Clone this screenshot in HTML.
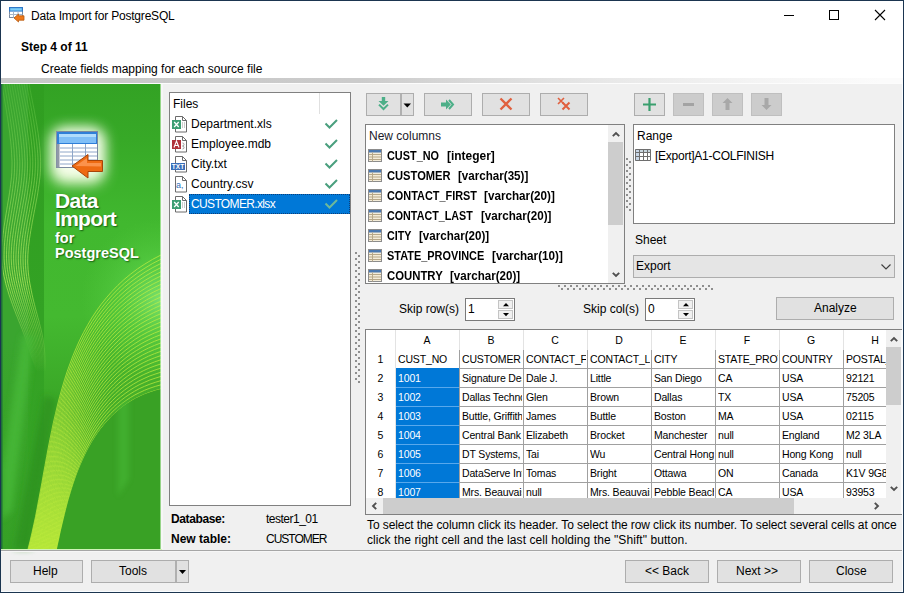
<!DOCTYPE html>
<html><head><meta charset="utf-8">
<style>
*{margin:0;padding:0;box-sizing:border-box}
html,body{width:904px;height:593px;overflow:hidden;background:#f0f0f0}
body{position:relative;font-family:"Liberation Sans",sans-serif;font-size:12px;color:#000}
.a{position:absolute}
.t{position:absolute;line-height:14px;white-space:nowrap}
.b{font-weight:bold}
.btn{position:absolute;background:#e1e1e1;border:1px solid #adadad}
.dis{position:absolute;background:#cccccc;border:1px solid #bfbfbf}
.box{position:absolute;background:#fff;border:1px solid #828790}
.g{position:absolute;font-size:10px;line-height:12px;white-space:nowrap;overflow:hidden}
svg{position:absolute;overflow:visible}
</style></head><body>
<!-- header -->
<div class="a" style="left:0;top:0;width:904px;height:78px;background:#fff"></div>
<div class="a" style="left:0;top:78px;width:904px;height:5px;background:linear-gradient(to right,#c8c8c8 0,#cbcbcb 360px,#dadada 480px,#e9e9e9 620px,#f4f4f4 760px,#fbfbfb 880px)"></div>
<div class="a" style="left:0;top:83px;width:904px;height:1px;background:#fcfcfc"></div>

<!-- title icon -->
<svg style="left:9px;top:7px" width="16" height="16" viewBox="0 0 16 16">
  <rect x="0.5" y="0.5" width="13" height="10" fill="#fff" stroke="#7a8aa0"/>
  <rect x="0" y="0" width="14" height="4.6" fill="#2f78c8"/>
  <rect x="1.2" y="1.2" width="11.6" height="2.4" fill="#7cd0fa"/>
  <path d="M4.5 4.6v6M9 4.6v6M0.5 7.5h13" stroke="#a8b6c8" stroke-width="1"/>
  <path d="M5 11 L9.5 7 V8.8 H15 V13.2 H9.5 V15 Z" fill="#f07818" stroke="#b85a10" stroke-width="0.8"/>
</svg>
<div class="t" style="left:31px;top:9px;letter-spacing:-0.2px">Data Import for PostgreSQL</div>

<!-- window controls -->
<div class="a" style="left:784px;top:15px;width:10px;height:1px;background:#000"></div>
<div class="a" style="left:829px;top:10px;width:10px;height:10px;border:1px solid #000"></div>
<svg style="left:875px;top:10px" width="10" height="10" viewBox="0 0 10 10"><path d="M0 0L10 10M10 0L0 10" stroke="#000" stroke-width="1.1"/></svg>

<div class="t b" style="left:21px;top:40px">Step 4 of 11</div>
<div class="t" style="left:41px;top:62px">Create fields mapping for each source file</div>

<!-- green panel -->
<svg style="left:1px;top:84px" width="160" height="465" viewBox="0 0 160 465">
<defs>
<linearGradient id="gb" x1="0" y1="0" x2="0" y2="1">
<stop offset="0" stop-color="#33a224"/><stop offset="0.12" stop-color="#37a927"/><stop offset="0.3" stop-color="#41b82f"/><stop offset="0.5" stop-color="#44b930"/><stop offset="0.68" stop-color="#3aa727"/><stop offset="1" stop-color="#389f24"/>
</linearGradient>
<radialGradient id="glow" cx="0.5" cy="0.5" r="0.5">
<stop offset="0" stop-color="#ffffff" stop-opacity="1"/><stop offset="0.55" stop-color="#f0ffd8" stop-opacity="0.85"/><stop offset="1" stop-color="#a0e878" stop-opacity="0"/>
</radialGradient>
<linearGradient id="sw" x1="0" y1="0" x2="0" y2="1">
<stop offset="0" stop-color="#8ee040" stop-opacity="0"/><stop offset="0.55" stop-color="#8ed83a" stop-opacity="0.15"/><stop offset="1" stop-color="#a8e030" stop-opacity="0.9"/>
</linearGradient>
<radialGradient id="rt" cx="160" cy="215" r="80" gradientUnits="userSpaceOnUse">
<stop offset="0" stop-color="#7ae070" stop-opacity="1"/><stop offset="0.5" stop-color="#5ad048" stop-opacity="0.6"/><stop offset="1" stop-color="#52c83c" stop-opacity="0"/>
</radialGradient>
</defs>
<rect width="160" height="465" fill="url(#gb)"/>
<rect x="0" y="0" width="160" height="465" fill="url(#rt)"/>
<linearGradient id="ls" x1="0" y1="0" x2="0" y2="465" gradientUnits="userSpaceOnUse"><stop offset="0" stop-color="#3aa52f"/><stop offset="0.55" stop-color="#3aa52f"/><stop offset="0.75" stop-color="#38a328"/><stop offset="1" stop-color="#36a026"/></linearGradient>
<rect x="0" y="0" width="27" height="465" fill="url(#ls)"/>
<linearGradient id="ds" x1="0" y1="0" x2="0" y2="465" gradientUnits="userSpaceOnUse"><stop offset="0" stop-color="#309e21"/><stop offset="0.5" stop-color="#33a224"/><stop offset="1" stop-color="#37a326"/></linearGradient>
<rect x="27" y="0" width="16" height="465" fill="url(#ds)"/>
<linearGradient id="lg" x1="0" y1="0" x2="0" y2="320" gradientUnits="userSpaceOnUse"><stop offset="0" stop-color="#70d050" stop-opacity="0.4"/><stop offset="0.3" stop-color="#98e060" stop-opacity="0.75"/><stop offset="0.62" stop-color="#c0f060" stop-opacity="1"/><stop offset="0.82" stop-color="#a0e060" stop-opacity="0.35"/><stop offset="0.9" stop-color="#a0e060" stop-opacity="0"/></linearGradient>
<g fill="none" stroke="url(#lg)" stroke-width="0.7"><path d="M1.0 0.0 L1.2 1.8 L1.5 3.9 L1.9 6.1 L2.3 8.6 L2.8 11.3 L3.3 14.2 L3.8 17.2 L4.3 20.4 L4.9 23.7 L5.5 27.2 L6.0 30.8 L6.6 34.4 L7.2 38.2 L7.7 42.0 L8.3 45.9 L8.8 49.8 L9.2 53.8 L9.7 57.7 L10.1 61.7 L10.4 65.6 L10.6 69.6 L10.8 73.4 L11.0 77.3 L11.0 81.0 L10.9 84.8 L10.8 88.6 L10.5 92.5 L10.1 96.5 L9.6 100.5 L9.1 104.6 L8.5 108.7 L7.9 112.9 L7.2 117.0 L6.5 121.2 L5.8 125.5 L5.1 129.7 L4.4 133.9 L3.8 138.1 L3.1 142.3 L2.6 146.5 L2.0 150.6 L1.6 154.7 L1.2 158.8 L0.9 162.7 L0.8 166.7 L0.7 170.5 L0.8 174.3 L1.0 178.0 L1.4 181.6 L1.8 185.3 L2.4 188.9 L3.1 192.5 L4.0 196.1 L4.8 199.7 L5.8 203.3 L6.9 206.8 L7.9 210.3 L9.1 213.8 L10.3 217.2 L11.5 220.6 L12.7 223.9 L14.0 227.2 L15.2 230.4 L16.5 233.5 L17.7 236.6 L18.9 239.6 L20.1 242.6 L21.2 245.4 L22.2 248.2 L23.2 250.9 L24.2 253.5 L25.0 256.0 L25.8 258.4 L26.6 260.8 L27.3 263.1 L28.1 265.3 L28.8 267.5 L29.5 269.6 L30.2 271.7 L30.9 273.6 L31.6 275.5 L32.3 277.4 L32.9 279.2 L33.5 280.9 L34.1 282.5 L34.7 284.1 L35.2 285.6 L35.7 287.0 L36.2 288.4 L36.7 289.7 L37.2 290.9 L37.6 292.1 L38.0 293.2 L38.4 294.2 L38.7 295.1 L39.0 296.0"/><path d="M3.5 0.0 L3.7 1.8 L4.0 3.9 L4.4 6.1 L4.8 8.6 L5.3 11.3 L5.8 14.2 L6.3 17.2 L6.9 20.4 L7.4 23.7 L8.0 27.2 L8.6 30.8 L9.2 34.4 L9.8 38.2 L10.3 42.0 L10.8 45.9 L11.4 49.8 L11.8 53.8 L12.3 57.7 L12.6 61.7 L13.0 65.6 L13.2 69.6 L13.4 73.4 L13.6 77.3 L13.6 81.0 L13.5 84.8 L13.4 88.6 L13.1 92.5 L12.7 96.5 L12.2 100.5 L11.7 104.6 L11.1 108.7 L10.5 112.9 L9.8 117.0 L9.1 121.2 L8.4 125.5 L7.7 129.7 L7.0 133.9 L6.3 138.1 L5.6 142.3 L5.0 146.5 L4.5 150.6 L4.0 154.7 L3.6 158.8 L3.3 162.7 L3.2 166.7 L3.1 170.5 L3.1 174.3 L3.3 178.0 L3.7 181.6 L4.1 185.3 L4.7 188.9 L5.4 192.5 L6.2 196.1 L7.0 199.7 L8.0 203.3 L9.0 206.8 L10.0 210.3 L11.2 213.8 L12.3 217.2 L13.5 220.6 L14.7 223.9 L15.9 227.2 L17.1 230.4 L18.3 233.5 L19.5 236.6 L20.7 239.6 L21.8 242.6 L22.9 245.4 L23.9 248.2 L24.9 250.9 L25.8 253.5 L26.6 256.0 L27.3 258.4 L28.0 260.8 L28.8 263.1 L29.5 265.3 L30.2 267.5 L30.8 269.6 L31.5 271.7 L32.1 273.6 L32.7 275.5 L33.3 277.4 L33.9 279.2 L34.5 280.9 L35.0 282.5 L35.6 284.1 L36.1 285.6 L36.5 287.0 L37.0 288.4 L37.4 289.7 L37.8 290.9 L38.2 292.1 L38.6 293.2 L38.9 294.2 L39.2 295.1 L39.5 296.0"/><path d="M5.9 0.0 L6.2 1.8 L6.5 3.9 L6.9 6.1 L7.3 8.6 L7.8 11.3 L8.3 14.2 L8.8 17.2 L9.4 20.4 L9.9 23.7 L10.5 27.2 L11.1 30.8 L11.7 34.4 L12.3 38.2 L12.9 42.0 L13.4 45.9 L13.9 49.8 L14.4 53.8 L14.9 57.7 L15.2 61.7 L15.6 65.6 L15.8 69.6 L16.0 73.4 L16.2 77.3 L16.2 81.0 L16.1 84.8 L15.9 88.6 L15.7 92.5 L15.3 96.5 L14.8 100.5 L14.3 104.6 L13.7 108.7 L13.0 112.9 L12.3 117.0 L11.6 121.2 L10.9 125.5 L10.2 129.7 L9.5 133.9 L8.8 138.1 L8.1 142.3 L7.5 146.5 L7.0 150.6 L6.5 154.7 L6.1 158.8 L5.8 162.7 L5.6 166.7 L5.5 170.5 L5.5 174.3 L5.7 178.0 L6.0 181.6 L6.4 185.3 L7.0 188.9 L7.6 192.5 L8.4 196.1 L9.2 199.7 L10.1 203.3 L11.1 206.8 L12.1 210.3 L13.2 213.8 L14.3 217.2 L15.5 220.6 L16.7 223.9 L17.8 227.2 L19.0 230.4 L20.2 233.5 L21.4 236.6 L22.5 239.6 L23.6 242.6 L24.6 245.4 L25.6 248.2 L26.5 250.9 L27.4 253.5 L28.1 256.0 L28.8 258.4 L29.5 260.8 L30.2 263.1 L30.9 265.3 L31.5 267.5 L32.1 269.6 L32.7 271.7 L33.3 273.6 L33.9 275.5 L34.4 277.4 L35.0 279.2 L35.5 280.9 L36.0 282.5 L36.5 284.1 L36.9 285.6 L37.3 287.0 L37.8 288.4 L38.1 289.7 L38.5 290.9 L38.9 292.1 L39.2 293.2 L39.5 294.2 L39.8 295.1 L40.0 296.0"/><path d="M8.4 0.0 L8.7 1.8 L9.0 3.9 L9.4 6.1 L9.8 8.6 L10.3 11.3 L10.8 14.2 L11.3 17.2 L11.9 20.4 L12.5 23.7 L13.1 27.2 L13.7 30.8 L14.3 34.4 L14.9 38.2 L15.4 42.0 L16.0 45.9 L16.5 49.8 L17.0 53.8 L17.4 57.7 L17.8 61.7 L18.2 65.6 L18.4 69.6 L18.6 73.4 L18.8 77.3 L18.8 81.0 L18.7 84.8 L18.5 88.6 L18.2 92.5 L17.9 96.5 L17.4 100.5 L16.8 104.6 L16.2 108.7 L15.6 112.9 L14.9 117.0 L14.2 121.2 L13.4 125.5 L12.7 129.7 L12.0 133.9 L11.3 138.1 L10.6 142.3 L10.0 146.5 L9.4 150.6 L8.9 154.7 L8.5 158.8 L8.2 162.7 L8.0 166.7 L7.8 170.5 L7.9 174.3 L8.0 178.0 L8.3 181.6 L8.7 185.3 L9.2 188.9 L9.9 192.5 L10.6 196.1 L11.4 199.7 L12.3 203.3 L13.2 206.8 L14.2 210.3 L15.3 213.8 L16.4 217.2 L17.5 220.6 L18.6 223.9 L19.8 227.2 L20.9 230.4 L22.1 233.5 L23.2 236.6 L24.3 239.6 L25.3 242.6 L26.3 245.4 L27.3 248.2 L28.1 250.9 L29.0 253.5 L29.7 256.0 L30.3 258.4 L31.0 260.8 L31.6 263.1 L32.2 265.3 L32.8 267.5 L33.4 269.6 L34.0 271.7 L34.5 273.6 L35.0 275.5 L35.5 277.4 L36.0 279.2 L36.5 280.9 L36.9 282.5 L37.3 284.1 L37.8 285.6 L38.1 287.0 L38.5 288.4 L38.9 289.7 L39.2 290.9 L39.5 292.1 L39.8 293.2 L40.1 294.2 L40.3 295.1 L40.6 296.0"/><path d="M10.9 0.0 L11.1 1.8 L11.5 3.9 L11.8 6.1 L12.3 8.6 L12.8 11.3 L13.3 14.2 L13.8 17.2 L14.4 20.4 L15.0 23.7 L15.6 27.2 L16.2 30.8 L16.8 34.4 L17.4 38.2 L18.0 42.0 L18.6 45.9 L19.1 49.8 L19.6 53.8 L20.0 57.7 L20.4 61.7 L20.8 65.6 L21.0 69.6 L21.2 73.4 L21.4 77.3 L21.4 81.0 L21.3 84.8 L21.1 88.6 L20.8 92.5 L20.4 96.5 L20.0 100.5 L19.4 104.6 L18.8 108.7 L18.1 112.9 L17.4 117.0 L16.7 121.2 L16.0 125.5 L15.2 129.7 L14.5 133.9 L13.8 138.1 L13.1 142.3 L12.5 146.5 L11.9 150.6 L11.4 154.7 L10.9 158.8 L10.6 162.7 L10.4 166.7 L10.2 170.5 L10.2 174.3 L10.4 178.0 L10.6 181.6 L11.0 185.3 L11.5 188.9 L12.1 192.5 L12.8 196.1 L13.6 199.7 L14.4 203.3 L15.4 206.8 L16.3 210.3 L17.4 213.8 L18.4 217.2 L19.5 220.6 L20.6 223.9 L21.7 227.2 L22.8 230.4 L23.9 233.5 L25.0 236.6 L26.0 239.6 L27.1 242.6 L28.0 245.4 L28.9 248.2 L29.8 250.9 L30.6 253.5 L31.2 256.0 L31.9 258.4 L32.5 260.8 L33.1 263.1 L33.6 265.3 L34.2 267.5 L34.7 269.6 L35.2 271.7 L35.7 273.6 L36.2 275.5 L36.6 277.4 L37.1 279.2 L37.5 280.9 L37.9 282.5 L38.2 284.1 L38.6 285.6 L38.9 287.0 L39.3 288.4 L39.6 289.7 L39.9 290.9 L40.1 292.1 L40.4 293.2 L40.6 294.2 L40.9 295.1 L41.1 296.0"/><path d="M13.3 0.0 L13.6 1.8 L13.9 3.9 L14.3 6.1 L14.8 8.6 L15.3 11.3 L15.8 14.2 L16.3 17.2 L16.9 20.4 L17.5 23.7 L18.1 27.2 L18.8 30.8 L19.4 34.4 L20.0 38.2 L20.6 42.0 L21.1 45.9 L21.7 49.8 L22.2 53.8 L22.6 57.7 L23.0 61.7 L23.4 65.6 L23.6 69.6 L23.8 73.4 L24.0 77.3 L24.0 81.0 L23.9 84.8 L23.7 88.6 L23.4 92.5 L23.0 96.5 L22.5 100.5 L22.0 104.6 L21.4 108.7 L20.7 112.9 L20.0 117.0 L19.3 121.2 L18.5 125.5 L17.8 129.7 L17.0 133.9 L16.3 138.1 L15.6 142.3 L15.0 146.5 L14.4 150.6 L13.8 154.7 L13.4 158.8 L13.0 162.7 L12.8 166.7 L12.6 170.5 L12.6 174.3 L12.7 178.0 L12.9 181.6 L13.3 185.3 L13.8 188.9 L14.4 192.5 L15.0 196.1 L15.8 199.7 L16.6 203.3 L17.5 206.8 L18.4 210.3 L19.4 213.8 L20.4 217.2 L21.5 220.6 L22.6 223.9 L23.6 227.2 L24.7 230.4 L25.8 233.5 L26.8 236.6 L27.8 239.6 L28.8 242.6 L29.7 245.4 L30.6 248.2 L31.4 250.9 L32.2 253.5 L32.8 256.0 L33.4 258.4 L34.0 260.8 L34.5 263.1 L35.0 265.3 L35.5 267.5 L36.0 269.6 L36.5 271.7 L36.9 273.6 L37.3 275.5 L37.7 277.4 L38.1 279.2 L38.5 280.9 L38.8 282.5 L39.1 284.1 L39.4 285.6 L39.7 287.0 L40.0 288.4 L40.3 289.7 L40.5 290.9 L40.8 292.1 L41.0 293.2 L41.2 294.2 L41.4 295.1 L41.6 296.0"/><path d="M15.8 0.0 L16.1 1.8 L16.4 3.9 L16.8 6.1 L17.3 8.6 L17.7 11.3 L18.3 14.2 L18.8 17.2 L19.4 20.4 L20.1 23.7 L20.7 27.2 L21.3 30.8 L21.9 34.4 L22.5 38.2 L23.1 42.0 L23.7 45.9 L24.3 49.8 L24.8 53.8 L25.2 57.7 L25.6 61.7 L26.0 65.6 L26.2 69.6 L26.4 73.4 L26.6 77.3 L26.6 81.0 L26.5 84.8 L26.3 88.6 L26.0 92.5 L25.6 96.5 L25.1 100.5 L24.6 104.6 L23.9 108.7 L23.3 112.9 L22.5 117.0 L21.8 121.2 L21.0 125.5 L20.3 129.7 L19.5 133.9 L18.8 138.1 L18.1 142.3 L17.4 146.5 L16.8 150.6 L16.3 154.7 L15.8 158.8 L15.4 162.7 L15.2 166.7 L15.0 170.5 L14.9 174.3 L15.0 178.0 L15.3 181.6 L15.6 185.3 L16.1 188.9 L16.6 192.5 L17.2 196.1 L18.0 199.7 L18.8 203.3 L19.6 206.8 L20.5 210.3 L21.5 213.8 L22.5 217.2 L23.5 220.6 L24.5 223.9 L25.6 227.2 L26.6 230.4 L27.6 233.5 L28.6 236.6 L29.6 239.6 L30.6 242.6 L31.5 245.4 L32.3 248.2 L33.1 250.9 L33.8 253.5 L34.4 256.0 L34.9 258.4 L35.4 260.8 L35.9 263.1 L36.4 265.3 L36.9 267.5 L37.3 269.6 L37.7 271.7 L38.1 273.6 L38.5 275.5 L38.8 277.4 L39.1 279.2 L39.4 280.9 L39.7 282.5 L40.0 284.1 L40.3 285.6 L40.5 287.0 L40.8 288.4 L41.0 289.7 L41.2 290.9 L41.4 292.1 L41.6 293.2 L41.8 294.2 L42.0 295.1 L42.1 296.0"/><path d="M18.3 0.0 L18.6 1.8 L18.9 3.9 L19.3 6.1 L19.7 8.6 L20.2 11.3 L20.8 14.2 L21.4 17.2 L22.0 20.4 L22.6 23.7 L23.2 27.2 L23.9 30.8 L24.5 34.4 L25.1 38.2 L25.7 42.0 L26.3 45.9 L26.8 49.8 L27.4 53.8 L27.8 57.7 L28.2 61.7 L28.6 65.6 L28.8 69.6 L29.1 73.4 L29.2 77.3 L29.2 81.0 L29.1 84.8 L28.9 88.6 L28.6 92.5 L28.2 96.5 L27.7 100.5 L27.1 104.6 L26.5 108.7 L25.8 112.9 L25.1 117.0 L24.3 121.2 L23.6 125.5 L22.8 129.7 L22.0 133.9 L21.3 138.1 L20.6 142.3 L19.9 146.5 L19.3 150.6 L18.7 154.7 L18.3 158.8 L17.9 162.7 L17.6 166.7 L17.4 170.5 L17.3 174.3 L17.4 178.0 L17.6 181.6 L17.9 185.3 L18.3 188.9 L18.8 192.5 L19.5 196.1 L20.2 199.7 L20.9 203.3 L21.7 206.8 L22.6 210.3 L23.6 213.8 L24.5 217.2 L25.5 220.6 L26.5 223.9 L27.5 227.2 L28.5 230.4 L29.5 233.5 L30.5 236.6 L31.4 239.6 L32.3 242.6 L33.2 245.4 L34.0 248.2 L34.7 250.9 L35.3 253.5 L35.9 256.0 L36.4 258.4 L36.9 260.8 L37.4 263.1 L37.8 265.3 L38.2 267.5 L38.6 269.6 L38.9 271.7 L39.3 273.6 L39.6 275.5 L39.9 277.4 L40.2 279.2 L40.4 280.9 L40.7 282.5 L40.9 284.1 L41.1 285.6 L41.3 287.0 L41.5 288.4 L41.7 289.7 L41.9 290.9 L42.0 292.1 L42.2 293.2 L42.4 294.2 L42.5 295.1 L42.6 296.0"/><path d="M20.8 0.0 L21.0 1.8 L21.4 3.9 L21.8 6.1 L22.2 8.6 L22.7 11.3 L23.3 14.2 L23.9 17.2 L24.5 20.4 L25.1 23.7 L25.7 27.2 L26.4 30.8 L27.0 34.4 L27.7 38.2 L28.3 42.0 L28.9 45.9 L29.4 49.8 L29.9 53.8 L30.4 57.7 L30.8 61.7 L31.2 65.6 L31.5 69.6 L31.7 73.4 L31.8 77.3 L31.8 81.0 L31.7 84.8 L31.5 88.6 L31.2 92.5 L30.8 96.5 L30.3 100.5 L29.7 104.6 L29.1 108.7 L28.4 112.9 L27.7 117.0 L26.9 121.2 L26.1 125.5 L25.3 129.7 L24.6 133.9 L23.8 138.1 L23.1 142.3 L22.4 146.5 L21.8 150.6 L21.2 154.7 L20.7 158.8 L20.3 162.7 L20.0 166.7 L19.8 170.5 L19.7 174.3 L19.7 178.0 L19.9 181.6 L20.2 185.3 L20.6 188.9 L21.1 192.5 L21.7 196.1 L22.3 199.7 L23.1 203.3 L23.9 206.8 L24.7 210.3 L25.6 213.8 L26.5 217.2 L27.5 220.6 L28.5 223.9 L29.4 227.2 L30.4 230.4 L31.3 233.5 L32.3 236.6 L33.2 239.6 L34.1 242.6 L34.9 245.4 L35.6 248.2 L36.3 250.9 L36.9 253.5 L37.5 256.0 L38.0 258.4 L38.4 260.8 L38.8 263.1 L39.2 265.3 L39.5 267.5 L39.9 269.6 L40.2 271.7 L40.5 273.6 L40.7 275.5 L41.0 277.4 L41.2 279.2 L41.4 280.9 L41.6 282.5 L41.8 284.1 L42.0 285.6 L42.1 287.0 L42.3 288.4 L42.4 289.7 L42.6 290.9 L42.7 292.1 L42.8 293.2 L42.9 294.2 L43.0 295.1 L43.2 296.0"/><path d="M23.2 0.0 L23.5 1.8 L23.8 3.9 L24.3 6.1 L24.7 8.6 L25.2 11.3 L25.8 14.2 L26.4 17.2 L27.0 20.4 L27.6 23.7 L28.3 27.2 L28.9 30.8 L29.6 34.4 L30.2 38.2 L30.8 42.0 L31.4 45.9 L32.0 49.8 L32.5 53.8 L33.0 57.7 L33.4 61.7 L33.8 65.6 L34.1 69.6 L34.3 73.4 L34.4 77.3 L34.4 81.0 L34.3 84.8 L34.1 88.6 L33.8 92.5 L33.4 96.5 L32.9 100.5 L32.3 104.6 L31.6 108.7 L30.9 112.9 L30.2 117.0 L29.4 121.2 L28.7 125.5 L27.9 129.7 L27.1 133.9 L26.3 138.1 L25.6 142.3 L24.9 146.5 L24.2 150.6 L23.6 154.7 L23.1 158.8 L22.7 162.7 L22.4 166.7 L22.1 170.5 L22.0 174.3 L22.1 178.0 L22.2 181.6 L22.5 185.3 L22.9 188.9 L23.3 192.5 L23.9 196.1 L24.5 199.7 L25.2 203.3 L26.0 206.8 L26.8 210.3 L27.7 213.8 L28.6 217.2 L29.5 220.6 L30.4 223.9 L31.4 227.2 L32.3 230.4 L33.2 233.5 L34.1 236.6 L35.0 239.6 L35.8 242.6 L36.6 245.4 L37.3 248.2 L38.0 250.9 L38.5 253.5 L39.0 256.0 L39.5 258.4 L39.9 260.8 L40.2 263.1 L40.6 265.3 L40.9 267.5 L41.2 269.6 L41.4 271.7 L41.7 273.6 L41.9 275.5 L42.1 277.4 L42.3 279.2 L42.4 280.9 L42.6 282.5 L42.7 284.1 L42.8 285.6 L42.9 287.0 L43.0 288.4 L43.1 289.7 L43.2 290.9 L43.3 292.1 L43.4 293.2 L43.5 294.2 L43.6 295.1 L43.7 296.0"/><path d="M25.7 0.0 L26.0 1.8 L26.3 3.9 L26.7 6.1 L27.2 8.6 L27.7 11.3 L28.3 14.2 L28.9 17.2 L29.5 20.4 L30.2 23.7 L30.8 27.2 L31.5 30.8 L32.1 34.4 L32.8 38.2 L33.4 42.0 L34.0 45.9 L34.6 49.8 L35.1 53.8 L35.6 57.7 L36.0 61.7 L36.4 65.6 L36.7 69.6 L36.9 73.4 L37.0 77.3 L37.0 81.0 L36.9 84.8 L36.7 88.6 L36.4 92.5 L35.9 96.5 L35.4 100.5 L34.9 104.6 L34.2 108.7 L33.5 112.9 L32.8 117.0 L32.0 121.2 L31.2 125.5 L30.4 129.7 L29.6 133.9 L28.8 138.1 L28.1 142.3 L27.4 146.5 L26.7 150.6 L26.1 154.7 L25.6 158.8 L25.1 162.7 L24.8 166.7 L24.5 170.5 L24.4 174.3 L24.4 178.0 L24.5 181.6 L24.8 185.3 L25.1 188.9 L25.6 192.5 L26.1 196.1 L26.7 199.7 L27.4 203.3 L28.1 206.8 L28.9 210.3 L29.7 213.8 L30.6 217.2 L31.5 220.6 L32.4 223.9 L33.3 227.2 L34.2 230.4 L35.1 233.5 L35.9 236.6 L36.8 239.6 L37.6 242.6 L38.3 245.4 L39.0 248.2 L39.6 250.9 L40.1 253.5 L40.6 256.0 L41.0 258.4 L41.4 260.8 L41.7 263.1 L42.0 265.3 L42.2 267.5 L42.5 269.6 L42.7 271.7 L42.9 273.6 L43.0 275.5 L43.2 277.4 L43.3 279.2 L43.4 280.9 L43.5 282.5 L43.6 284.1 L43.7 285.6 L43.7 287.0 L43.8 288.4 L43.8 289.7 L43.9 290.9 L44.0 292.1 L44.0 293.2 L44.1 294.2 L44.1 295.1 L44.2 296.0"/><path d="M28.2 0.0 L28.4 1.8 L28.8 3.9 L29.2 6.1 L29.7 8.6 L30.2 11.3 L30.8 14.2 L31.4 17.2 L32.0 20.4 L32.7 23.7 L33.4 27.2 L34.0 30.8 L34.7 34.4 L35.3 38.2 L36.0 42.0 L36.6 45.9 L37.2 49.8 L37.7 53.8 L38.2 57.7 L38.6 61.7 L39.0 65.6 L39.3 69.6 L39.5 73.4 L39.6 77.3 L39.6 81.0 L39.5 84.8 L39.3 88.6 L39.0 92.5 L38.5 96.5 L38.0 100.5 L37.4 104.6 L36.8 108.7 L36.1 112.9 L35.3 117.0 L34.5 121.2 L33.7 125.5 L32.9 129.7 L32.1 133.9 L31.3 138.1 L30.6 142.3 L29.8 146.5 L29.2 150.6 L28.5 154.7 L28.0 158.8 L27.5 162.7 L27.2 166.7 L26.9 170.5 L26.8 174.3 L26.7 178.0 L26.9 181.6 L27.1 185.3 L27.4 188.9 L27.8 192.5 L28.3 196.1 L28.9 199.7 L29.6 203.3 L30.3 206.8 L31.0 210.3 L31.8 213.8 L32.6 217.2 L33.5 220.6 L34.3 223.9 L35.2 227.2 L36.1 230.4 L36.9 233.5 L37.8 236.6 L38.5 239.6 L39.3 242.6 L40.0 245.4 L40.7 248.2 L41.2 250.9 L41.7 253.5 L42.2 256.0 L42.5 258.4 L42.8 260.8 L43.1 263.1 L43.4 265.3 L43.6 267.5 L43.8 269.6 L43.9 271.7 L44.1 273.6 L44.2 275.5 L44.3 277.4 L44.3 279.2 L44.4 280.9 L44.5 282.5 L44.5 284.1 L44.5 285.6 L44.5 287.0 L44.5 288.4 L44.6 289.7 L44.6 290.9 L44.6 292.1 L44.6 293.2 L44.6 294.2 L44.7 295.1 L44.7 296.0"/></g>
<filter id="bl3" x="-50%" y="-20%" width="200%" height="140%"><feGaussianBlur stdDeviation="3"/></filter>
<path d="M21 251 L33 251 L11 426 L1 436 L1 386 Z" fill="#46b837" opacity="0.85" filter="url(#bl3)"/>
<path d="M43 311 L55 316 L31 465 L13 465 Z" fill="#2a8c1e" opacity="0.6" filter="url(#bl3)"/>
<path d="M160.0 171.0 L151.7 175.3 L143.9 180.0 L136.5 184.9 L129.5 190.2 L122.9 195.7 L116.7 201.5 L110.8 207.6 L105.3 213.9 L100.1 220.4 L95.3 227.1 L90.7 234.1 L86.5 241.3 L82.5 248.6 L78.7 256.1 L75.3 263.8 L72.0 271.6 L69.0 279.6 L66.1 287.7 L63.5 295.9 L61.0 304.2 L58.7 312.5 L56.5 321.0 L54.5 329.5 L52.5 338.1 L50.7 346.7 L48.9 355.4 L47.2 364.1 L45.6 372.7 L44.0 381.4 L42.4 390.1 L40.9 398.7 L39.3 407.2 L37.7 415.7 L36.1 424.2 L34.5 432.6 L32.7 440.8 L30.9 449.0 L29.0 457.1 L27.0 465.0 L56.0 465.0 L57.0 460.2 L58.1 455.4 L59.1 450.4 L60.2 445.5 L61.4 440.5 L62.6 435.4 L63.8 430.4 L65.1 425.3 L66.4 420.2 L67.8 415.1 L69.3 410.0 L70.8 405.0 L72.4 399.9 L74.1 394.9 L75.9 389.9 L77.8 385.0 L79.8 380.2 L81.9 375.4 L84.1 370.7 L86.5 366.0 L88.9 361.5 L91.5 357.1 L94.2 352.7 L97.0 348.5 L100.0 344.4 L103.2 340.5 L106.5 336.7 L109.9 333.0 L113.5 329.5 L117.3 326.2 L121.3 323.0 L125.4 320.0 L129.8 317.2 L134.3 314.6 L139.0 312.3 L144.0 310.1 L149.1 308.2 L154.4 306.5 L160.0 305.0 Z" fill="url(#sw)"/>
<g fill="none" stroke="#c8f040" stroke-width="0.8" opacity="0.85"><path d="M160.0 171.0 L151.7 175.3 L143.9 180.0 L136.5 184.9 L129.5 190.2 L122.9 195.7 L116.7 201.5 L110.8 207.6 L105.3 213.9 L100.1 220.4 L95.3 227.1 L90.7 234.1 L86.5 241.3 L82.5 248.6 L78.7 256.1 L75.3 263.8 L72.0 271.6 L69.0 279.6 L66.1 287.7 L63.5 295.9 L61.0 304.2 L58.7 312.5 L56.5 321.0 L54.5 329.5 L52.5 338.1 L50.7 346.7 L48.9 355.4 L47.2 364.1 L45.6 372.7 L44.0 381.4 L42.4 390.1 L40.9 398.7 L39.3 407.2 L37.7 415.7 L36.1 424.2 L34.5 432.6 L32.7 440.8 L30.9 449.0 L29.0 457.1 L27.0 465.0"/><path d="M160.0 175.2 L151.8 179.4 L144.1 184.0 L136.7 188.8 L129.8 194.0 L123.3 199.4 L117.1 205.1 L111.3 211.1 L105.8 217.3 L100.7 223.7 L95.9 230.3 L91.3 237.2 L87.1 244.2 L83.1 251.5 L79.4 258.9 L75.9 266.4 L72.7 274.2 L69.7 282.0 L66.8 290.0 L64.2 298.1 L61.7 306.2 L59.4 314.5 L57.2 322.9 L55.2 331.3 L53.3 339.7 L51.4 348.3 L49.7 356.8 L48.0 365.3 L46.3 373.9 L44.8 382.5 L43.2 391.0 L41.6 399.5 L40.1 408.0 L38.5 416.4 L36.9 424.7 L35.3 433.0 L33.5 441.1 L31.8 449.2 L29.9 457.2 L27.9 465.0"/><path d="M160.0 179.4 L151.9 183.5 L144.2 188.0 L137.0 192.8 L130.1 197.8 L123.6 203.1 L117.5 208.7 L111.7 214.6 L106.3 220.7 L101.2 227.0 L96.4 233.5 L91.9 240.3 L87.7 247.2 L83.8 254.3 L80.1 261.6 L76.6 269.1 L73.4 276.7 L70.4 284.4 L67.6 292.3 L64.9 300.2 L62.5 308.3 L60.1 316.5 L58.0 324.7 L55.9 333.0 L54.0 341.4 L52.1 349.8 L50.4 358.2 L48.7 366.6 L47.1 375.1 L45.5 383.5 L43.9 391.9 L42.4 400.3 L40.8 408.7 L39.3 417.0 L37.7 425.2 L36.1 433.4 L34.4 441.4 L32.6 449.4 L30.8 457.3 L28.8 465.0"/><path d="M160.0 183.6 L152.0 187.6 L144.4 192.0 L137.2 196.7 L130.4 201.6 L124.0 206.9 L117.9 212.4 L112.2 218.1 L106.8 224.1 L101.8 230.3 L97.0 236.7 L92.5 243.4 L88.3 250.2 L84.4 257.2 L80.7 264.4 L77.3 271.7 L74.1 279.2 L71.1 286.8 L68.3 294.6 L65.6 302.4 L63.2 310.4 L60.9 318.4 L58.7 326.6 L56.6 334.7 L54.7 343.0 L52.9 351.3 L51.1 359.6 L49.4 367.9 L47.8 376.2 L46.2 384.6 L44.7 392.9 L43.2 401.2 L41.6 409.4 L40.1 417.6 L38.5 425.7 L36.9 433.8 L35.2 441.7 L33.5 449.6 L31.6 457.4 L29.7 465.0"/><path d="M160.0 187.8 L152.1 191.7 L144.6 196.0 L137.4 200.6 L130.7 205.4 L124.3 210.6 L118.3 216.0 L112.7 221.6 L107.3 227.5 L102.3 233.6 L97.6 239.9 L93.1 246.5 L89.0 253.2 L85.1 260.1 L81.4 267.2 L78.0 274.4 L74.8 281.8 L71.8 289.3 L69.0 296.9 L66.4 304.6 L63.9 312.5 L61.6 320.4 L59.4 328.4 L57.4 336.5 L55.4 344.6 L53.6 352.8 L51.9 361.0 L50.2 369.2 L48.6 377.4 L47.0 385.6 L45.4 393.8 L43.9 402.0 L42.4 410.1 L40.8 418.2 L39.3 426.2 L37.7 434.2 L36.0 442.0 L34.3 449.8 L32.5 457.5 L30.6 465.0"/><path d="M160.0 191.9 L152.2 195.8 L144.7 200.0 L137.7 204.5 L131.0 209.3 L124.7 214.3 L118.7 219.6 L113.1 225.1 L107.8 230.9 L102.8 236.9 L98.1 243.1 L93.7 249.6 L89.6 256.2 L85.7 263.0 L82.1 269.9 L78.7 277.0 L75.5 284.3 L72.5 291.7 L69.7 299.2 L67.1 306.8 L64.6 314.6 L62.3 322.4 L60.2 330.3 L58.1 338.2 L56.2 346.2 L54.3 354.3 L52.6 362.4 L50.9 370.5 L49.3 378.6 L47.7 386.7 L46.2 394.8 L44.7 402.8 L43.1 410.8 L41.6 418.8 L40.1 426.7 L38.5 434.6 L36.8 442.3 L35.2 450.0 L33.4 457.6 L31.5 465.0"/><path d="M160.0 196.1 L152.2 199.9 L144.9 204.0 L137.9 208.4 L131.3 213.1 L125.1 218.0 L119.1 223.2 L113.6 228.6 L108.3 234.3 L103.4 240.2 L98.7 246.3 L94.3 252.6 L90.2 259.1 L86.4 265.8 L82.7 272.7 L79.3 279.7 L76.2 286.8 L73.2 294.1 L70.4 301.5 L67.8 309.0 L65.3 316.6 L63.0 324.3 L60.9 332.1 L58.8 339.9 L56.9 347.8 L55.1 355.8 L53.3 363.7 L51.7 371.7 L50.0 379.7 L48.5 387.7 L46.9 395.7 L45.4 403.7 L43.9 411.6 L42.4 419.4 L40.9 427.2 L39.3 435.0 L37.7 442.6 L36.0 450.2 L34.3 457.7 L32.4 465.0"/><path d="M160.0 200.3 L152.3 204.0 L145.0 208.0 L138.1 212.3 L131.6 216.9 L125.4 221.7 L119.6 226.8 L114.0 232.2 L108.8 237.7 L103.9 243.5 L99.3 249.5 L94.9 255.7 L90.8 262.1 L87.0 268.7 L83.4 275.4 L80.0 282.3 L76.9 289.4 L73.9 296.5 L71.1 303.8 L68.5 311.2 L66.1 318.7 L63.8 326.3 L61.6 334.0 L59.6 341.7 L57.6 349.5 L55.8 357.3 L54.1 365.1 L52.4 373.0 L50.8 380.9 L49.2 388.8 L47.7 396.6 L46.2 404.5 L44.7 412.3 L43.2 420.1 L41.6 427.8 L40.1 435.4 L38.5 442.9 L36.9 450.4 L35.1 457.8 L33.3 465.0"/><path d="M160.0 204.5 L152.4 208.1 L145.2 212.0 L138.4 216.2 L131.9 220.7 L125.8 225.4 L120.0 230.4 L114.5 235.7 L109.3 241.1 L104.4 246.8 L99.8 252.7 L95.5 258.8 L91.5 265.1 L87.6 271.6 L84.1 278.2 L80.7 285.0 L77.6 291.9 L74.6 298.9 L71.8 306.1 L69.2 313.4 L66.8 320.8 L64.5 328.3 L62.3 335.8 L60.3 343.4 L58.4 351.1 L56.5 358.8 L54.8 366.5 L53.1 374.3 L51.5 382.1 L50.0 389.8 L48.4 397.6 L46.9 405.3 L45.4 413.0 L43.9 420.7 L42.4 428.3 L40.9 435.8 L39.3 443.2 L37.7 450.6 L36.0 457.9 L34.2 465.0"/><path d="M160.0 208.7 L152.5 212.2 L145.4 216.0 L138.6 220.1 L132.2 224.5 L126.1 229.2 L120.4 234.1 L114.9 239.2 L109.8 244.6 L105.0 250.1 L100.4 255.9 L96.1 261.9 L92.1 268.1 L88.3 274.4 L84.7 281.0 L81.4 287.6 L78.2 294.4 L75.3 301.4 L72.5 308.4 L69.9 315.6 L67.5 322.9 L65.2 330.2 L63.1 337.7 L61.0 345.2 L59.1 352.7 L57.3 360.3 L55.5 367.9 L53.9 375.6 L52.3 383.2 L50.7 390.9 L49.2 398.5 L47.7 406.2 L46.2 413.7 L44.7 421.3 L43.2 428.8 L41.7 436.2 L40.2 443.5 L38.6 450.8 L36.9 458.0 L35.2 465.0"/><path d="M160.0 212.9 L152.6 216.3 L145.5 220.0 L138.8 224.0 L132.5 228.3 L126.5 232.9 L120.8 237.7 L115.4 242.7 L110.3 248.0 L105.5 253.4 L101.0 259.1 L96.7 265.0 L92.7 271.1 L88.9 277.3 L85.4 283.7 L82.1 290.3 L78.9 297.0 L76.0 303.8 L73.2 310.7 L70.7 317.8 L68.2 324.9 L65.9 332.2 L63.8 339.5 L61.8 346.9 L59.8 354.3 L58.0 361.8 L56.3 369.3 L54.6 376.8 L53.0 384.4 L51.4 391.9 L49.9 399.5 L48.4 407.0 L47.0 414.5 L45.5 421.9 L44.0 429.3 L42.5 436.6 L41.0 443.8 L39.4 451.0 L37.8 458.1 L36.1 465.0"/><path d="M160.0 217.1 L152.7 220.4 L145.7 224.0 L139.1 228.0 L132.8 232.1 L126.8 236.6 L121.2 241.3 L115.9 246.2 L110.8 251.4 L106.1 256.7 L101.6 262.3 L97.3 268.1 L93.3 274.1 L89.6 280.2 L86.1 286.5 L82.7 292.9 L79.6 299.5 L76.7 306.2 L74.0 313.0 L71.4 320.0 L69.0 327.0 L66.7 334.2 L64.5 341.4 L62.5 348.6 L60.6 355.9 L58.7 363.3 L57.0 370.7 L55.3 378.1 L53.7 385.6 L52.2 393.0 L50.7 400.4 L49.2 407.8 L47.7 415.2 L46.3 422.5 L44.8 429.8 L43.3 437.0 L41.8 444.1 L40.2 451.2 L38.6 458.1 L37.0 465.0"/><path d="M160.0 221.2 L152.7 224.5 L145.9 228.1 L139.3 231.9 L133.1 236.0 L127.2 240.3 L121.6 244.9 L116.3 249.7 L111.3 254.8 L106.6 260.1 L102.1 265.5 L97.9 271.2 L94.0 277.0 L90.2 283.1 L86.7 289.2 L83.4 295.6 L80.3 302.0 L77.4 308.6 L74.7 315.4 L72.1 322.2 L69.7 329.1 L67.4 336.1 L65.2 343.2 L63.2 350.4 L61.3 357.6 L59.5 364.8 L57.7 372.1 L56.1 379.4 L54.5 386.7 L52.9 394.0 L51.4 401.4 L50.0 408.6 L48.5 415.9 L47.0 423.1 L45.6 430.3 L44.1 437.4 L42.6 444.4 L41.1 451.4 L39.5 458.2 L37.9 465.0"/><path d="M160.0 225.4 L152.8 228.6 L146.0 232.1 L139.5 235.8 L133.4 239.8 L127.5 244.0 L122.0 248.5 L116.8 253.2 L111.8 258.2 L107.1 263.4 L102.7 268.7 L98.5 274.3 L94.6 280.0 L90.9 285.9 L87.4 292.0 L84.1 298.2 L81.0 304.6 L78.1 311.1 L75.4 317.7 L72.8 324.4 L70.4 331.2 L68.1 338.1 L66.0 345.1 L64.0 352.1 L62.0 359.2 L60.2 366.3 L58.5 373.5 L56.8 380.7 L55.2 387.9 L53.7 395.1 L52.2 402.3 L50.7 409.5 L49.3 416.6 L47.8 423.7 L46.4 430.8 L44.9 437.8 L43.5 444.7 L41.9 451.6 L40.4 458.3 L38.8 465.0"/><path d="M160.0 229.6 L152.9 232.7 L146.2 236.1 L139.8 239.7 L133.7 243.6 L127.9 247.7 L122.4 252.1 L117.2 256.8 L112.3 261.6 L107.7 266.7 L103.3 271.9 L99.1 277.4 L95.2 283.0 L91.5 288.8 L88.1 294.8 L84.8 300.9 L81.7 307.1 L78.8 313.5 L76.1 320.0 L73.5 326.6 L71.1 333.3 L68.8 340.0 L66.7 346.9 L64.7 353.8 L62.8 360.8 L60.9 367.8 L59.2 374.9 L57.6 382.0 L56.0 389.1 L54.4 396.1 L52.9 403.2 L51.5 410.3 L50.0 417.4 L48.6 424.4 L47.2 431.3 L45.7 438.2 L44.3 445.0 L42.8 451.8 L41.3 458.4 L39.7 465.0"/><path d="M160.0 233.8 L153.0 236.8 L146.3 240.1 L140.0 243.6 L134.0 247.4 L128.3 251.5 L122.8 255.8 L117.7 260.3 L112.8 265.0 L108.2 270.0 L103.8 275.1 L99.7 280.5 L95.8 286.0 L92.2 291.7 L88.7 297.5 L85.5 303.5 L82.4 309.6 L79.5 315.9 L76.8 322.3 L74.3 328.8 L71.8 335.3 L69.6 342.0 L67.4 348.7 L65.4 355.6 L63.5 362.4 L61.7 369.3 L59.9 376.3 L58.3 383.2 L56.7 390.2 L55.2 397.2 L53.7 404.2 L52.2 411.1 L50.8 418.1 L49.4 425.0 L48.0 431.8 L46.5 438.6 L45.1 445.3 L43.6 452.0 L42.1 458.5 L40.6 465.0"/><path d="M160.0 238.0 L153.1 240.9 L146.5 244.1 L140.2 247.5 L134.3 251.2 L128.6 255.2 L123.2 259.4 L118.1 263.8 L113.3 268.4 L108.7 273.3 L104.4 278.3 L100.3 283.6 L96.5 289.0 L92.8 294.5 L89.4 300.3 L86.1 306.2 L83.1 312.2 L80.2 318.3 L77.5 324.6 L75.0 331.0 L72.6 337.4 L70.3 344.0 L68.2 350.6 L66.1 357.3 L64.2 364.0 L62.4 370.8 L60.7 377.7 L59.0 384.5 L57.4 391.4 L55.9 398.3 L54.4 405.1 L53.0 412.0 L51.6 418.8 L50.1 425.6 L48.7 432.3 L47.3 439.0 L45.9 445.6 L44.5 452.2 L43.0 458.6 L41.5 465.0"/><path d="M160.0 242.2 L153.2 245.0 L146.7 248.1 L140.5 251.4 L134.6 255.0 L129.0 258.9 L123.6 263.0 L118.6 267.3 L113.8 271.8 L109.3 276.6 L105.0 281.5 L100.9 286.6 L97.1 291.9 L93.5 297.4 L90.1 303.0 L86.8 308.8 L83.8 314.7 L80.9 320.7 L78.2 326.9 L75.7 333.1 L73.3 339.5 L71.0 345.9 L68.9 352.4 L66.9 359.0 L65.0 365.7 L63.1 372.3 L61.4 379.1 L59.8 385.8 L58.2 392.5 L56.6 399.3 L55.2 406.1 L53.7 412.8 L52.3 419.5 L50.9 426.2 L49.5 432.8 L48.2 439.4 L46.8 445.9 L45.3 452.4 L43.9 458.7 L42.4 465.0"/><path d="M160.0 246.4 L153.3 249.1 L146.8 252.1 L140.7 255.3 L134.9 258.9 L129.3 262.6 L124.1 266.6 L119.1 270.8 L114.3 275.2 L109.8 279.9 L105.6 284.7 L101.5 289.7 L97.7 294.9 L94.1 300.3 L90.7 305.8 L87.5 311.5 L84.5 317.2 L81.6 323.2 L78.9 329.2 L76.4 335.3 L74.0 341.6 L71.8 347.9 L69.6 354.3 L67.6 360.8 L65.7 367.3 L63.9 373.8 L62.1 380.4 L60.5 387.1 L58.9 393.7 L57.4 400.4 L55.9 407.0 L54.5 413.6 L53.1 420.2 L51.7 426.8 L50.3 433.3 L49.0 439.8 L47.6 446.2 L46.2 452.6 L44.8 458.8 L43.3 465.0"/><path d="M160.0 250.6 L153.3 253.2 L147.0 256.1 L140.9 259.3 L135.2 262.7 L129.7 266.3 L124.5 270.2 L119.5 274.3 L114.8 278.7 L110.3 283.2 L106.1 287.9 L102.1 292.8 L98.3 297.9 L94.8 303.2 L91.4 308.6 L88.2 314.1 L85.2 319.8 L82.3 325.6 L79.7 331.5 L77.1 337.5 L74.7 343.7 L72.5 349.9 L70.3 356.1 L68.3 362.5 L66.4 368.9 L64.6 375.3 L62.9 381.8 L61.2 388.3 L59.7 394.9 L58.1 401.4 L56.7 407.9 L55.2 414.5 L53.8 421.0 L52.5 427.4 L51.1 433.9 L49.8 440.2 L48.4 446.5 L47.0 452.8 L45.6 458.9 L44.2 465.0"/><path d="M160.0 254.8 L153.4 257.3 L147.1 260.1 L141.2 263.2 L135.5 266.5 L130.0 270.0 L124.9 273.8 L120.0 277.8 L115.3 282.1 L110.9 286.5 L106.7 291.1 L102.7 295.9 L99.0 300.9 L95.4 306.0 L92.0 311.3 L88.9 316.7 L85.9 322.3 L83.0 328.0 L80.4 333.8 L77.8 339.7 L75.5 345.7 L73.2 351.8 L71.1 358.0 L69.1 364.2 L67.2 370.5 L65.3 376.9 L63.6 383.2 L62.0 389.6 L60.4 396.0 L58.9 402.5 L57.4 408.9 L56.0 415.3 L54.6 421.7 L53.2 428.0 L51.9 434.4 L50.6 440.6 L49.2 446.8 L47.9 453.0 L46.5 459.0 L45.1 465.0"/><path d="M160.0 258.9 L153.5 261.4 L147.3 264.1 L141.4 267.1 L135.8 270.3 L130.4 273.8 L125.3 277.5 L120.4 281.4 L115.8 285.5 L111.4 289.8 L107.3 294.3 L103.3 299.0 L99.6 303.9 L96.1 308.9 L92.7 314.1 L89.6 319.4 L86.6 324.9 L83.7 330.4 L81.1 336.1 L78.6 341.9 L76.2 347.8 L73.9 353.8 L71.8 359.8 L69.8 366.0 L67.9 372.1 L66.1 378.4 L64.4 384.6 L62.7 390.9 L61.1 397.2 L59.6 403.5 L58.2 409.8 L56.7 416.1 L55.4 422.4 L54.0 428.7 L52.7 434.9 L51.4 441.0 L50.1 447.1 L48.7 453.2 L47.4 459.1 L46.0 465.0"/><path d="M160.0 263.1 L153.6 265.5 L147.5 268.1 L141.6 271.0 L136.1 274.1 L130.7 277.5 L125.7 281.1 L120.9 284.9 L116.3 288.9 L112.0 293.1 L107.8 297.5 L103.9 302.1 L100.2 306.9 L96.7 311.8 L93.4 316.8 L90.2 322.0 L87.3 327.4 L84.4 332.9 L81.8 338.4 L79.3 344.1 L76.9 349.9 L74.7 355.8 L72.5 361.7 L70.5 367.7 L68.6 373.8 L66.8 379.9 L65.1 386.0 L63.4 392.2 L61.9 398.4 L60.4 404.6 L58.9 410.8 L57.5 417.0 L56.1 423.1 L54.8 429.3 L53.5 435.4 L52.2 441.4 L50.9 447.4 L49.6 453.4 L48.3 459.2 L46.9 465.0"/><path d="M160.0 267.3 L153.7 269.6 L147.6 272.1 L141.9 274.9 L136.4 277.9 L131.1 281.2 L126.1 284.7 L121.3 288.4 L116.8 292.3 L112.5 296.4 L108.4 300.7 L104.5 305.2 L100.8 309.8 L97.3 314.6 L94.0 319.6 L90.9 324.7 L88.0 329.9 L85.1 335.3 L82.5 340.7 L80.0 346.3 L77.6 352.0 L75.4 357.7 L73.3 363.5 L71.3 369.4 L69.3 375.4 L67.5 381.4 L65.8 387.4 L64.2 393.5 L62.6 399.5 L61.1 405.6 L59.7 411.7 L58.3 417.8 L56.9 423.9 L55.6 429.9 L54.3 435.9 L53.0 441.8 L51.7 447.7 L50.4 453.6 L49.1 459.3 L47.8 465.0"/><path d="M160.0 271.5 L153.8 273.7 L147.8 276.1 L142.1 278.8 L136.7 281.7 L131.5 284.9 L126.5 288.3 L121.8 291.9 L117.3 295.7 L113.0 299.7 L109.0 303.9 L105.1 308.3 L101.5 312.8 L98.0 317.5 L94.7 322.4 L91.6 327.3 L88.6 332.5 L85.9 337.7 L83.2 343.0 L80.7 348.5 L78.3 354.0 L76.1 359.7 L74.0 365.4 L72.0 371.2 L70.1 377.0 L68.3 382.9 L66.6 388.8 L64.9 394.7 L63.4 400.7 L61.9 406.7 L60.4 412.7 L59.0 418.6 L57.7 424.6 L56.4 430.5 L55.1 436.4 L53.8 442.2 L52.5 448.0 L51.3 453.8 L50.0 459.4 L48.8 465.0"/><path d="M160.0 275.7 L153.8 277.8 L148.0 280.1 L142.3 282.7 L136.9 285.6 L131.8 288.6 L126.9 291.9 L122.2 295.4 L117.8 299.1 L113.6 303.0 L109.5 307.1 L105.7 311.4 L102.1 315.8 L98.6 320.4 L95.4 325.1 L92.3 330.0 L89.3 335.0 L86.6 340.1 L83.9 345.4 L81.4 350.7 L79.1 356.1 L76.8 361.6 L74.7 367.2 L72.7 372.9 L70.8 378.6 L69.0 384.4 L67.3 390.2 L65.7 396.0 L64.1 401.9 L62.6 407.7 L61.2 413.6 L59.8 419.5 L58.4 425.3 L57.1 431.1 L55.9 436.9 L54.6 442.7 L53.4 448.3 L52.1 454.0 L50.9 459.5 L49.7 465.0"/><path d="M160.0 279.9 L153.9 281.9 L148.1 284.1 L142.6 286.6 L137.2 289.4 L132.2 292.3 L127.3 295.5 L122.7 298.9 L118.3 302.5 L114.1 306.3 L110.1 310.3 L106.3 314.5 L102.7 318.8 L99.3 323.3 L96.0 327.9 L93.0 332.6 L90.0 337.5 L87.3 342.5 L84.6 347.7 L82.1 352.9 L79.8 358.2 L77.6 363.6 L75.4 369.1 L73.4 374.6 L71.5 380.2 L69.7 385.9 L68.0 391.6 L66.4 397.3 L64.8 403.0 L63.3 408.8 L61.9 414.5 L60.5 420.3 L59.2 426.0 L57.9 431.7 L56.6 437.4 L55.4 443.1 L54.2 448.6 L53.0 454.2 L51.8 459.6 L50.6 465.0"/><path d="M160.0 284.1 L154.0 286.0 L148.3 288.1 L142.8 290.5 L137.5 293.2 L132.5 296.1 L127.7 299.2 L123.2 302.4 L118.8 305.9 L114.6 309.6 L110.7 313.5 L106.9 317.6 L103.3 321.8 L99.9 326.1 L96.7 330.6 L93.6 335.3 L90.7 340.1 L88.0 345.0 L85.3 350.0 L82.9 355.1 L80.5 360.3 L78.3 365.6 L76.2 370.9 L74.2 376.4 L72.3 381.9 L70.5 387.4 L68.8 393.0 L67.1 398.6 L65.6 404.2 L64.1 409.8 L62.7 415.5 L61.3 421.1 L60.0 426.7 L58.7 432.4 L57.4 437.9 L56.2 443.5 L55.0 448.9 L53.8 454.4 L52.6 459.7 L51.5 465.0"/><path d="M160.0 288.2 L154.1 290.1 L148.4 292.1 L143.0 294.5 L137.8 297.0 L132.9 299.8 L128.1 302.8 L123.6 306.0 L119.3 309.4 L115.2 312.9 L111.3 316.7 L107.5 320.6 L104.0 324.7 L100.6 329.0 L97.4 333.4 L94.3 337.9 L91.4 342.6 L88.7 347.4 L86.1 352.3 L83.6 357.3 L81.2 362.4 L79.0 367.5 L76.9 372.8 L74.9 378.1 L73.0 383.5 L71.2 388.9 L69.5 394.4 L67.9 399.8 L66.3 405.4 L64.8 410.9 L63.4 416.4 L62.0 422.0 L60.7 427.5 L59.5 433.0 L58.2 438.4 L57.0 443.9 L55.8 449.2 L54.7 454.6 L53.5 459.8 L52.4 465.0"/><path d="M160.0 292.4 L154.2 294.2 L148.6 296.1 L143.3 298.4 L138.1 300.8 L133.2 303.5 L128.6 306.4 L124.1 309.5 L119.8 312.8 L115.7 316.2 L111.8 319.9 L108.1 323.7 L104.6 327.7 L101.2 331.9 L98.0 336.2 L95.0 340.6 L92.1 345.1 L89.4 349.8 L86.8 354.6 L84.3 359.5 L82.0 364.4 L79.7 369.5 L77.6 374.6 L75.6 379.8 L73.7 385.1 L71.9 390.4 L70.2 395.7 L68.6 401.1 L67.0 406.5 L65.6 411.9 L64.2 417.4 L62.8 422.8 L61.5 428.2 L60.2 433.6 L59.0 438.9 L57.8 444.3 L56.7 449.5 L55.5 454.8 L54.4 459.9 L53.3 465.0"/><path d="M160.0 296.6 L154.3 298.3 L148.8 300.2 L143.5 302.3 L138.4 304.6 L133.6 307.2 L129.0 310.0 L124.5 313.0 L120.3 316.2 L116.3 319.6 L112.4 323.1 L108.7 326.8 L105.2 330.7 L101.9 334.7 L98.7 338.9 L95.7 343.2 L92.8 347.7 L90.1 352.2 L87.5 356.9 L85.0 361.7 L82.7 366.5 L80.5 371.5 L78.4 376.5 L76.4 381.6 L74.5 386.7 L72.7 391.9 L71.0 397.1 L69.3 402.4 L67.8 407.7 L66.3 413.0 L64.9 418.3 L63.5 423.6 L62.3 428.9 L61.0 434.2 L59.8 439.5 L58.6 444.7 L57.5 449.8 L56.4 455.0 L55.3 460.0 L54.2 465.0"/><path d="M160.0 300.8 L154.3 302.4 L148.9 304.2 L143.7 306.2 L138.7 308.5 L133.9 310.9 L129.4 313.6 L125.0 316.5 L120.8 319.6 L116.8 322.9 L113.0 326.3 L109.3 329.9 L105.8 333.7 L102.5 337.6 L99.4 341.7 L96.4 345.9 L93.5 350.2 L90.8 354.6 L88.2 359.2 L85.7 363.9 L83.4 368.6 L81.2 373.4 L79.1 378.3 L77.1 383.3 L75.2 388.3 L73.4 393.4 L71.7 398.5 L70.1 403.7 L68.5 408.9 L67.1 414.1 L65.6 419.3 L64.3 424.5 L63.0 429.6 L61.8 434.8 L60.6 440.0 L59.4 445.1 L58.3 450.1 L57.2 455.2 L56.1 460.1 L55.1 465.0"/><path d="M160.0 305.0 L154.4 306.5 L149.1 308.2 L144.0 310.1 L139.0 312.3 L134.3 314.6 L129.8 317.2 L125.4 320.0 L121.3 323.0 L117.3 326.2 L113.5 329.5 L109.9 333.0 L106.5 336.7 L103.2 340.5 L100.0 344.4 L97.0 348.5 L94.2 352.7 L91.5 357.1 L88.9 361.5 L86.5 366.0 L84.1 370.7 L81.9 375.4 L79.8 380.2 L77.8 385.0 L75.9 389.9 L74.1 394.9 L72.4 399.9 L70.8 405.0 L69.3 410.0 L67.8 415.1 L66.4 420.2 L65.1 425.3 L63.8 430.4 L62.6 435.4 L61.4 440.5 L60.2 445.5 L59.1 450.4 L58.1 455.4 L57.0 460.2 L56.0 465.0"/></g>
<path d="M160.0 305.0 L154.4 306.5 L149.1 308.2 L144.0 310.1 L139.0 312.3 L134.3 314.6 L129.8 317.2 L125.4 320.0 L121.3 323.0 L117.3 326.2 L113.5 329.5 L109.9 333.0 L106.5 336.7 L103.2 340.5 L100.0 344.4 L97.0 348.5 L94.2 352.7 L91.5 357.1 L88.9 361.5 L86.5 366.0 L84.1 370.7 L81.9 375.4 L79.8 380.2 L77.8 385.0 L75.9 389.9 L74.1 394.9 L72.4 399.9 L70.8 405.0 L69.3 410.0 L67.8 415.1 L66.4 420.2 L65.1 425.3 L63.8 430.4 L62.6 435.4 L61.4 440.5 L60.2 445.5 L59.1 450.4 L58.1 455.4 L57.0 460.2 L56.0 465.0 L160 465 L160 305 Z" fill="#39a125"/>
<filter id="bl2" x="-100%" y="-20%" width="300%" height="140%"><feGaussianBlur stdDeviation="2.5"/></filter><path d="M117 322 L128 314 L128 395 L117 412 Z" fill="#48bc38" opacity="0.5" filter="url(#bl2)"/>
<filter id="bl" x="-50%" y="-50%" width="200%" height="200%"><feGaussianBlur stdDeviation="7"/></filter><rect x="50" y="44" width="54" height="56" rx="14" fill="#f4ffe0" opacity="0.95" filter="url(#bl)"/><rect x="54" y="46" width="46" height="44" rx="6" fill="#ffffff" opacity="0.6" filter="url(#bl)"/>
<g transform="translate(55,47)">
<rect x="0.5" y="0.5" width="41" height="36" fill="#fff" stroke="#7a8aa0"/>
<rect x="0.5" y="0.5" width="3" height="36" fill="#9098a8"/>
<rect x="1" y="1" width="40" height="12" fill="#2f7fd8"/>
<rect x="3" y="3" width="37" height="9" fill="#7fbff7"/>
<rect x="3" y="3" width="37" height="3" fill="#b0dcfc"/>
<path d="M4 17h37M4 21h37M4 25h37M4 29h37M4 33h37M16.5 13v23M29.5 13v23" stroke="#8ea6c8" stroke-width="1"/>
<path d="M16 35 L32 23.5 V29.5 H46.5 V40.5 H32 V47 Z" fill="#ee6a12" stroke="#a84408" stroke-width="1"/>
<path d="M19.5 35 L31 27 V32 H45 V35.5 Z" fill="#ffa060" opacity="0.75"/>
</g>
<rect x="0" y="0" width="1.5" height="465" fill="#1f6e3a"/>
</svg>
<div class="t b" style="left:55px;top:190px;font-size:21px;line-height:22px;letter-spacing:-0.7px;color:#fff;text-shadow:1px 1px 1.5px rgba(0,50,0,.65)">Data</div>
<div class="t b" style="left:55px;top:208px;font-size:21px;line-height:22px;letter-spacing:-0.7px;color:#fff;text-shadow:1px 1px 1.5px rgba(0,50,0,.65)">Import</div>
<div class="t b" style="left:55px;top:230px;font-size:14.5px;line-height:16px;color:#fff;text-shadow:1px 1px 1.5px rgba(0,50,0,.65)">for</div>
<div class="t b" style="left:55px;top:244.5px;font-size:14.5px;line-height:16px;color:#fff;text-shadow:1px 1px 1.5px rgba(0,50,0,.65)">PostgreSQL</div>
<div class="a" style="left:160px;top:84px;width:1px;height:465px;background:rgba(230,255,220,0.55)"></div>
<div class="a" style="left:161px;top:84px;width:2px;height:465px;background:#f6f6f6"></div>
<div class="a" style="left:1px;top:549px;width:161px;height:1px;background:#d0f4b8"></div>

<!-- files box -->
<div class="box" style="left:169px;top:92px;width:182px;height:414px;border-color:#808080"></div>
<div class="a" style="left:319px;top:93px;width:1px;height:21px;background:#e0e0e0"></div>
<div class="t" style="left:173px;top:97px">Files</div>

<div id="files"></div>
<!-- xls icon -->
<svg style="left:172px;top:116px" width="16" height="17" viewBox="0 0 16 17">
  <path d="M3.5 0.5h7l4 4v11.5h-11z" fill="#fff" stroke="#6b6b6b"/>
  <path d="M10.5 0.5v4h4" fill="none" stroke="#6b6b6b"/>
  <rect x="0" y="4" width="9" height="9" fill="#3d9e73"/>
  <path d="M2.2 6l4.5 5M6.7 6l-4.5 5" stroke="#fff" stroke-width="1.3"/>
  <path d="M10 7h1M12 7h1M10 9h1M12 9h1M10 11h1M12 11h1" stroke="#9a9a9a"/>
</svg>
<div class="t" style="left:191px;top:117px">Department.xls</div>
<svg style="left:172px;top:136px" width="16" height="17" viewBox="0 0 16 17">
  <path d="M3.5 0.5h7l4 4v11.5h-11z" fill="#fff" stroke="#6b6b6b"/>
  <path d="M10.5 0.5v4h4" fill="none" stroke="#6b6b6b"/>
  <rect x="0" y="4" width="9" height="9" fill="#b0323a"/>
  <path d="M2 11.5l2.5-6.5l2.5 6.5M3 9.5h3" stroke="#fff" stroke-width="1.1" fill="none"/>
  <path d="M10.5 7a1.5 1.5 0 1 1 0 3a1.5 1.5 0 1 1 0 3" stroke="#9a9a9a" fill="none"/>
</svg>
<div class="t" style="left:191px;top:137px">Employee.mdb</div>
<svg style="left:171px;top:156px" width="17" height="17" viewBox="0 0 17 17">
  <path d="M4.5 0.5h7l4 4v11.5h-11z" fill="#fff" stroke="#6b6b6b"/>
  <path d="M11.5 0.5v4h4" fill="none" stroke="#6b6b6b"/>
  <rect x="0" y="7" width="14" height="7" fill="#3a6fb8"/>
  <text x="7" y="13" font-family="Liberation Sans" font-weight="bold" font-size="6.5" fill="#fff" text-anchor="middle">TXT</text>
</svg>
<div class="t" style="left:191px;top:157px">City.txt</div>
<svg style="left:172px;top:176px" width="16" height="17" viewBox="0 0 16 17">
  <path d="M3.5 0.5h7l4 4v11.5h-11z" fill="#fff" stroke="#6b6b6b"/>
  <path d="M10.5 0.5v4h4" fill="none" stroke="#6b6b6b"/>
  <text x="4" y="12" font-family="Liberation Sans" font-size="9" fill="#2d6fb8">a,</text>
</svg>
<div class="t" style="left:191px;top:177px">Country.csv</div>
<div class="a" style="left:189px;top:194px;width:161px;height:20px;background:#0078d7;border:1px dotted #0b3f7a"></div>
<svg style="left:172px;top:196px" width="16" height="17" viewBox="0 0 16 17">
  <path d="M3.5 0.5h7l4 4v11.5h-11z" fill="#fff" stroke="#6b6b6b"/>
  <path d="M10.5 0.5v4h4" fill="none" stroke="#6b6b6b"/>
  <rect x="0" y="4" width="9" height="9" fill="#3d9e73"/>
  <path d="M2.2 6l4.5 5M6.7 6l-4.5 5" stroke="#fff" stroke-width="1.3"/>
  <path d="M10 7h1M12 7h1M10 9h1M12 9h1M10 11h1M12 11h1" stroke="#9a9a9a"/>
</svg>
<div class="t" style="left:191px;top:197px;color:#fff;letter-spacing:-0.65px">CUSTOMER.xlsx</div>
<svg style="left:325px;top:119px" width="13" height="110" viewBox="0 0 13 110">
  <g fill="none" stroke="#4a9f7e" stroke-width="2">
    <path d="M0.5 4.5l4 4l7.5-7.5"/>
    <path d="M0.5 24.5l4 4l7.5-7.5"/>
    <path d="M0.5 44.5l4 4l7.5-7.5"/>
    <path d="M0.5 64.5l4 4l7.5-7.5"/>
    <path d="M0.5 84.5l4 4l7.5-7.5" stroke="#6db89a"/>
  </g>
</svg>

<div class="t b" style="left:171px;top:512px;letter-spacing:-0.38px">Database:</div>
<div class="t" style="left:266px;top:512px;letter-spacing:-0.5px">tester1_01</div>
<div class="t b" style="left:171px;top:532px">New table:</div>
<div class="t" style="left:266px;top:532px;letter-spacing:-1px">CUSTOMER</div>

<!-- toolbar 1 -->
<div class="btn" style="left:366px;top:93px;width:48px;height:23px"></div>
<div class="a" style="left:400px;top:94px;width:2px;height:21px;background:#b0b0b0"></div>
<svg style="left:403px;top:103px" width="9" height="5"><path d="M0.5 0.5h7.5l-3.75 4z" fill="#000"/></svg>
<svg style="left:378px;top:96px" width="11" height="15" viewBox="0 0 11 15">
  <path d="M3.8 1h3.4v4h3.3l-5 4.8l-5-4.8h3.3z" fill="#4caf88"/>
  <path d="M1 8.6l4.5 4.4l4.5-4.4" fill="none" stroke="#4caf88" stroke-width="2"/>
</svg>
<div class="btn" style="left:424px;top:93px;width:48px;height:23px"></div>
<svg style="left:440px;top:99px" width="15" height="11" viewBox="0 0 15 11">
  <path d="M1 3.6h5v-3.1l4.8 5l-4.8 5v-3.1h-5z" fill="#4caf88"/>
  <path d="M9 1l4 4.5l-4 4.5" fill="none" stroke="#4caf88" stroke-width="2"/>
</svg>
<div class="btn" style="left:482px;top:93px;width:48px;height:23px"></div>
<svg style="left:499px;top:97px" width="14" height="14" viewBox="0 0 14 14">
  <path d="M1.5 1.5l11 11M12.5 1.5l-11 11" stroke="#e0603f" stroke-width="2.3"/>
</svg>
<div class="btn" style="left:540px;top:93px;width:48px;height:23px"></div>
<svg style="left:557px;top:97px" width="15" height="15" viewBox="0 0 15 15">
  <path d="M1 1l6 6M7 1l-6 6" stroke="#e0603f" stroke-width="1.6"/>
  <path d="M5.5 5.5l7 7M12.5 5.5l-7 7" stroke="#e0603f" stroke-width="2"/>
</svg>

<!-- toolbar 2 -->
<div class="btn" style="left:634px;top:93px;width:31px;height:23px"></div>
<svg style="left:643px;top:98px" width="13" height="13" viewBox="0 0 13 13"><path d="M6.5 0v13M0 6.5h13" stroke="#3a9f6e" stroke-width="2.2"/></svg>
<div class="dis" style="left:673px;top:93px;width:31px;height:23px"></div>
<div class="a" style="left:683px;top:103px;width:11px;height:3px;background:#a3a3a3"></div>
<div class="dis" style="left:712px;top:93px;width:31px;height:23px"></div>
<svg style="left:722px;top:98px" width="11" height="12" viewBox="0 0 11 12"><path d="M5.5 0l5 5h-3v7h-4v-7h-3z" fill="#a8a8a8"/></svg>
<div class="dis" style="left:751px;top:93px;width:31px;height:23px"></div>
<svg style="left:761px;top:98px" width="11" height="12" viewBox="0 0 11 12"><path d="M5.5 12l5-5h-3v-7h-4v7h-3z" fill="#a8a8a8"/></svg>

<!-- new columns list -->
<div class="box" style="left:365px;top:124px;width:260px;height:160px;border-color:#808080"></div>
<div class="a" style="left:608px;top:125px;width:16px;height:158px;background:#f0f0f0"></div>
<div class="a" style="left:608px;top:142px;width:15px;height:83px;background:#cdcdcd"></div>
<svg style="left:611.5px;top:131px" width="8" height="6" viewBox="0 0 8 6"><path d="M0.8 5.2L4 2L7.2 5.2" fill="none" stroke="#505050" stroke-width="1.9"/></svg>
<svg style="left:611.5px;top:272px" width="8" height="6" viewBox="0 0 8 6"><path d="M0.8 0.8L4 4L7.2 0.8" fill="none" stroke="#505050" stroke-width="1.9"/></svg>
<div class="t" style="left:369px;top:129px;color:#1a1a2a">New columns</div>
<div class="a" style="left:366px;top:125px;width:242px;height:158px;overflow:hidden">
<svg style="left:2px;top:24px" width="14" height="13" viewBox="0 0 14 13"><rect x="0.5" y="0.5" width="13" height="12" fill="#f4ecd8" stroke="#8c8c8c"/><rect x="1" y="1" width="12" height="2.5" fill="#4a78b0"/><path d="M1 5.5h12M1 8h12M1 10.5h12M4.5 3.5v9" stroke="#b8a888" stroke-width="1"/></svg>
<div class="t b" style="left:21px;top:24px;transform:scaleX(0.907);transform-origin:0 0">CUST_NO</div>
<div class="t b" style="left:80.8px;top:24px;transform:scaleX(0.996);transform-origin:0 0">[integer]</div>
<svg style="left:2px;top:44px" width="14" height="13" viewBox="0 0 14 13"><rect x="0.5" y="0.5" width="13" height="12" fill="#f4ecd8" stroke="#8c8c8c"/><rect x="1" y="1" width="12" height="2.5" fill="#4a78b0"/><path d="M1 5.5h12M1 8h12M1 10.5h12M4.5 3.5v9" stroke="#b8a888" stroke-width="1"/></svg>
<div class="t b" style="left:21px;top:44px;transform:scaleX(0.929);transform-origin:0 0">CUSTOMER</div>
<div class="t b" style="left:91.9px;top:44px;transform:scaleX(0.967);transform-origin:0 0">[varchar(35)]</div>
<svg style="left:2px;top:64px" width="14" height="13" viewBox="0 0 14 13"><rect x="0.5" y="0.5" width="13" height="12" fill="#f4ecd8" stroke="#8c8c8c"/><rect x="1" y="1" width="12" height="2.5" fill="#4a78b0"/><path d="M1 5.5h12M1 8h12M1 10.5h12M4.5 3.5v9" stroke="#b8a888" stroke-width="1"/></svg>
<div class="t b" style="left:21px;top:64px;transform:scaleX(0.908);transform-origin:0 0">CONTACT_FIRST</div>
<div class="t b" style="left:118.4px;top:64px;transform:scaleX(0.974);transform-origin:0 0">[varchar(20)]</div>
<svg style="left:2px;top:84px" width="14" height="13" viewBox="0 0 14 13"><rect x="0.5" y="0.5" width="13" height="12" fill="#f4ecd8" stroke="#8c8c8c"/><rect x="1" y="1" width="12" height="2.5" fill="#4a78b0"/><path d="M1 5.5h12M1 8h12M1 10.5h12M4.5 3.5v9" stroke="#b8a888" stroke-width="1"/></svg>
<div class="t b" style="left:21px;top:84px;transform:scaleX(0.895);transform-origin:0 0">CONTACT_LAST</div>
<div class="t b" style="left:115.1px;top:84px;transform:scaleX(0.968);transform-origin:0 0">[varchar(20)]</div>
<svg style="left:2px;top:104px" width="14" height="13" viewBox="0 0 14 13"><rect x="0.5" y="0.5" width="13" height="12" fill="#f4ecd8" stroke="#8c8c8c"/><rect x="1" y="1" width="12" height="2.5" fill="#4a78b0"/><path d="M1 5.5h12M1 8h12M1 10.5h12M4.5 3.5v9" stroke="#b8a888" stroke-width="1"/></svg>
<div class="t b" style="left:21px;top:104px;transform:scaleX(0.893);transform-origin:0 0">CITY</div>
<div class="t b" style="left:53.4px;top:104px;transform:scaleX(0.964);transform-origin:0 0">[varchar(20)]</div>
<svg style="left:2px;top:124px" width="14" height="13" viewBox="0 0 14 13"><rect x="0.5" y="0.5" width="13" height="12" fill="#f4ecd8" stroke="#8c8c8c"/><rect x="1" y="1" width="12" height="2.5" fill="#4a78b0"/><path d="M1 5.5h12M1 8h12M1 10.5h12M4.5 3.5v9" stroke="#b8a888" stroke-width="1"/></svg>
<div class="t b" style="left:21px;top:124px;transform:scaleX(0.910);transform-origin:0 0">STATE_PROVINCE</div>
<div class="t b" style="left:125.7px;top:124px;transform:scaleX(0.974);transform-origin:0 0">[varchar(10)]</div>
<svg style="left:2px;top:144px" width="14" height="13" viewBox="0 0 14 13"><rect x="0.5" y="0.5" width="13" height="12" fill="#f4ecd8" stroke="#8c8c8c"/><rect x="1" y="1" width="12" height="2.5" fill="#4a78b0"/><path d="M1 5.5h12M1 8h12M1 10.5h12M4.5 3.5v9" stroke="#b8a888" stroke-width="1"/></svg>
<div class="t b" style="left:21px;top:144px;transform:scaleX(0.946);transform-origin:0 0">COUNTRY</div>
<div class="t b" style="left:84.4px;top:144px;transform:scaleX(0.964);transform-origin:0 0">[varchar(20)]</div>
</div>

<!-- range -->
<div class="box" style="left:633px;top:124px;width:262px;height:100px;border-color:#808080"></div>
<div class="t" style="left:637px;top:129px">Range</div>
<svg style="left:635px;top:149px" width="16" height="12" viewBox="0 0 16 12">
  <rect x="0" y="0" width="16" height="12" fill="#fff"/>
  <rect x="0" y="0" width="16" height="4" fill="#c8d6de"/>
  <rect x="0" y="0" width="4.5" height="12" fill="#c8d6e6"/>
  <path d="M0.5 0.5h15v11h-15zM4.5 0.5v11M8.5 0.5v11M12.5 0.5v11M0.5 3.5h15M0.5 7.5h15" fill="none" stroke="#6e6e6e"/>
</svg>
<div class="t" style="left:655px;top:149px;letter-spacing:-0.25px">[Export]A1-COLFINISH</div>
<div class="t" style="left:635px;top:233px">Sheet</div>
<div class="btn" style="left:633px;top:255px;width:262px;height:23px;background:#e5e5e5;border-color:#adadad"></div>
<div class="t" style="left:636px;top:259px">Export</div>
<svg style="left:881px;top:264px" width="10" height="6" viewBox="0 0 10 6"><path d="M0.5 0.5l4.5 4.5l4.5-4.5" fill="none" stroke="#404040" stroke-width="1.2"/></svg>

<!-- splitter dots -->
<svg style="left:0;top:0" width="904" height="593"><g fill="#8e8e8e"><rect x="626" y="158" width="2" height="2"/><rect x="629" y="161" width="2" height="2"/><rect x="626" y="164" width="2" height="2"/><rect x="629" y="167" width="2" height="2"/><rect x="626" y="170" width="2" height="2"/><rect x="629" y="173" width="2" height="2"/><rect x="626" y="176" width="2" height="2"/><rect x="629" y="179" width="2" height="2"/><rect x="626" y="182" width="2" height="2"/><rect x="629" y="185" width="2" height="2"/><rect x="626" y="188" width="2" height="2"/><rect x="629" y="191" width="2" height="2"/><rect x="626" y="194" width="2" height="2"/><rect x="629" y="197" width="2" height="2"/><rect x="626" y="200" width="2" height="2"/><rect x="629" y="203" width="2" height="2"/><rect x="626" y="206" width="2" height="2"/><rect x="629" y="209" width="2" height="2"/><rect x="558" y="285" width="2" height="2"/><rect x="561" y="288" width="2" height="2"/><rect x="564" y="285" width="2" height="2"/><rect x="567" y="288" width="2" height="2"/><rect x="570" y="285" width="2" height="2"/><rect x="573" y="288" width="2" height="2"/><rect x="576" y="285" width="2" height="2"/><rect x="579" y="288" width="2" height="2"/><rect x="582" y="285" width="2" height="2"/><rect x="585" y="288" width="2" height="2"/><rect x="588" y="285" width="2" height="2"/><rect x="591" y="288" width="2" height="2"/><rect x="594" y="285" width="2" height="2"/><rect x="597" y="288" width="2" height="2"/><rect x="600" y="285" width="2" height="2"/><rect x="603" y="288" width="2" height="2"/><rect x="606" y="285" width="2" height="2"/><rect x="609" y="288" width="2" height="2"/><rect x="612" y="285" width="2" height="2"/><rect x="615" y="288" width="2" height="2"/><rect x="618" y="285" width="2" height="2"/><rect x="621" y="288" width="2" height="2"/><rect x="624" y="285" width="2" height="2"/><rect x="627" y="288" width="2" height="2"/><rect x="630" y="285" width="2" height="2"/><rect x="633" y="288" width="2" height="2"/><rect x="636" y="285" width="2" height="2"/><rect x="639" y="288" width="2" height="2"/><rect x="642" y="285" width="2" height="2"/><rect x="645" y="288" width="2" height="2"/><rect x="648" y="285" width="2" height="2"/><rect x="651" y="288" width="2" height="2"/><rect x="654" y="285" width="2" height="2"/><rect x="657" y="288" width="2" height="2"/><rect x="660" y="285" width="2" height="2"/><rect x="663" y="288" width="2" height="2"/><rect x="666" y="285" width="2" height="2"/><rect x="669" y="288" width="2" height="2"/><rect x="672" y="285" width="2" height="2"/><rect x="675" y="288" width="2" height="2"/><rect x="678" y="285" width="2" height="2"/><rect x="681" y="288" width="2" height="2"/><rect x="684" y="285" width="2" height="2"/><rect x="687" y="288" width="2" height="2"/><rect x="690" y="285" width="2" height="2"/><rect x="693" y="288" width="2" height="2"/><rect x="696" y="285" width="2" height="2"/><rect x="699" y="288" width="2" height="2"/><rect x="702" y="285" width="2" height="2"/><rect x="705" y="288" width="2" height="2"/><rect x="708" y="285" width="2" height="2"/><rect x="711" y="288" width="2" height="2"/><rect x="355" y="252" width="2" height="2"/><rect x="358" y="255" width="2" height="2"/><rect x="355" y="258" width="2" height="2"/><rect x="358" y="261" width="2" height="2"/><rect x="355" y="264" width="2" height="2"/><rect x="358" y="267" width="2" height="2"/><rect x="355" y="270" width="2" height="2"/><rect x="358" y="273" width="2" height="2"/><rect x="355" y="276" width="2" height="2"/><rect x="358" y="279" width="2" height="2"/><rect x="355" y="282" width="2" height="2"/><rect x="358" y="285" width="2" height="2"/><rect x="355" y="288" width="2" height="2"/><rect x="358" y="291" width="2" height="2"/><rect x="355" y="294" width="2" height="2"/><rect x="358" y="297" width="2" height="2"/><rect x="355" y="300" width="2" height="2"/><rect x="358" y="303" width="2" height="2"/><rect x="355" y="306" width="2" height="2"/><rect x="358" y="309" width="2" height="2"/><rect x="355" y="312" width="2" height="2"/><rect x="358" y="315" width="2" height="2"/><rect x="355" y="318" width="2" height="2"/><rect x="358" y="321" width="2" height="2"/><rect x="355" y="324" width="2" height="2"/><rect x="358" y="327" width="2" height="2"/><rect x="355" y="330" width="2" height="2"/><rect x="358" y="333" width="2" height="2"/><rect x="355" y="336" width="2" height="2"/><rect x="358" y="339" width="2" height="2"/><rect x="355" y="342" width="2" height="2"/><rect x="358" y="345" width="2" height="2"/><rect x="355" y="348" width="2" height="2"/><rect x="358" y="351" width="2" height="2"/><rect x="355" y="354" width="2" height="2"/><rect x="358" y="357" width="2" height="2"/><rect x="355" y="360" width="2" height="2"/><rect x="358" y="363" width="2" height="2"/><rect x="355" y="366" width="2" height="2"/><rect x="358" y="369" width="2" height="2"/><rect x="355" y="372" width="2" height="2"/><rect x="358" y="375" width="2" height="2"/><rect x="355" y="378" width="2" height="2"/><rect x="358" y="381" width="2" height="2"/></g></svg>

<!-- skip -->
<div class="t" style="left:399px;top:301.5px">Skip row(s)</div>
<div class="box" style="left:465px;top:298px;width:50px;height:23px;border-color:#7a7a7a"></div>
<div class="t" style="left:468px;top:302px">1</div>
<div class="a" style="left:498px;top:300px;width:15px;height:9px;background:#f0f0f0;border:1px solid #c4c4c4"></div>
<div class="a" style="left:498px;top:310px;width:15px;height:9px;background:#f0f0f0;border:1px solid #c4c4c4"></div>
<svg style="left:502.5px;top:303px" width="6" height="4"><path d="M0 3.2l3-3.2l3 3.2z" fill="#000"/></svg>
<svg style="left:502.5px;top:313px" width="6" height="4"><path d="M0 0l3 3.2l3-3.2z" fill="#000"/></svg>
<div class="t" style="left:583px;top:301.5px">Skip col(s)</div>
<div class="box" style="left:645px;top:298px;width:50px;height:23px;border-color:#7a7a7a"></div>
<div class="t" style="left:648px;top:302px">0</div>
<div class="a" style="left:678px;top:300px;width:15px;height:9px;background:#f0f0f0;border:1px solid #c4c4c4"></div>
<div class="a" style="left:678px;top:310px;width:15px;height:9px;background:#f0f0f0;border:1px solid #c4c4c4"></div>
<svg style="left:682.5px;top:303px" width="6" height="4"><path d="M0 3.2l3-3.2l3 3.2z" fill="#000"/></svg>
<svg style="left:682.5px;top:313px" width="6" height="4"><path d="M0 0l3 3.2l3-3.2z" fill="#000"/></svg>
<div class="btn" style="left:776px;top:297px;width:118px;height:23px"></div>
<div class="t" style="left:814px;top:301px">Analyze</div>

<!-- grid -->
<div class="box" style="left:365px;top:329px;width:538px;height:186px;border-color:#808080"></div>
<div class="a" style="left:366px;top:330px;width:520px;height:168px;overflow:hidden;background:#fff">
<div class="a" style="left:30px;top:38px;width:63px;height:19px;background:#0078d7"></div>
<div class="a" style="left:30px;top:57px;width:63px;height:19px;background:#0078d7"></div>
<div class="a" style="left:30px;top:57px;width:63px;height:1px;background:#58a8ec"></div>
<div class="a" style="left:30px;top:76px;width:63px;height:19px;background:#0078d7"></div>
<div class="a" style="left:30px;top:76px;width:63px;height:1px;background:#58a8ec"></div>
<div class="a" style="left:30px;top:95px;width:63px;height:19px;background:#0078d7"></div>
<div class="a" style="left:30px;top:95px;width:63px;height:1px;background:#58a8ec"></div>
<div class="a" style="left:30px;top:114px;width:63px;height:19px;background:#0078d7"></div>
<div class="a" style="left:30px;top:114px;width:63px;height:1px;background:#58a8ec"></div>
<div class="a" style="left:30px;top:133px;width:63px;height:19px;background:#0078d7"></div>
<div class="a" style="left:30px;top:133px;width:63px;height:1px;background:#58a8ec"></div>
<div class="a" style="left:30px;top:152px;width:63px;height:19px;background:#0078d7"></div>
<div class="a" style="left:30px;top:152px;width:63px;height:1px;background:#58a8ec"></div>
<div class="a" style="left:93px;top:38px;width:460px;height:1px;background:#a0a0a0"></div>
<div class="a" style="left:0px;top:38px;width:29px;height:1px;background:#fff"></div>
<div class="a" style="left:93px;top:57px;width:460px;height:1px;background:#a0a0a0"></div>
<div class="a" style="left:0px;top:57px;width:29px;height:1px;background:#fff"></div>
<div class="a" style="left:93px;top:76px;width:460px;height:1px;background:#a0a0a0"></div>
<div class="a" style="left:0px;top:76px;width:29px;height:1px;background:#fff"></div>
<div class="a" style="left:93px;top:95px;width:460px;height:1px;background:#a0a0a0"></div>
<div class="a" style="left:0px;top:95px;width:29px;height:1px;background:#fff"></div>
<div class="a" style="left:93px;top:114px;width:460px;height:1px;background:#a0a0a0"></div>
<div class="a" style="left:0px;top:114px;width:29px;height:1px;background:#fff"></div>
<div class="a" style="left:93px;top:133px;width:460px;height:1px;background:#a0a0a0"></div>
<div class="a" style="left:0px;top:133px;width:29px;height:1px;background:#fff"></div>
<div class="a" style="left:93px;top:152px;width:460px;height:1px;background:#a0a0a0"></div>
<div class="a" style="left:0px;top:152px;width:29px;height:1px;background:#fff"></div>
<div class="a" style="left:29px;top:0;width:1px;height:168px;background:#e3e3e3"></div>
<div class="a" style="left:93px;top:0;width:1px;height:20px;background:#e3e3e3"></div>
<div class="a" style="left:93px;top:20px;width:1px;height:148px;background:#a0a0a0"></div>
<div class="a" style="left:157px;top:0;width:1px;height:20px;background:#e3e3e3"></div>
<div class="a" style="left:157px;top:20px;width:1px;height:148px;background:#a0a0a0"></div>
<div class="a" style="left:221px;top:0;width:1px;height:20px;background:#e3e3e3"></div>
<div class="a" style="left:221px;top:20px;width:1px;height:148px;background:#a0a0a0"></div>
<div class="a" style="left:285px;top:0;width:1px;height:20px;background:#e3e3e3"></div>
<div class="a" style="left:285px;top:20px;width:1px;height:148px;background:#a0a0a0"></div>
<div class="a" style="left:349px;top:0;width:1px;height:20px;background:#e3e3e3"></div>
<div class="a" style="left:349px;top:20px;width:1px;height:148px;background:#a0a0a0"></div>
<div class="a" style="left:413px;top:0;width:1px;height:20px;background:#e3e3e3"></div>
<div class="a" style="left:413px;top:20px;width:1px;height:148px;background:#a0a0a0"></div>
<div class="a" style="left:477px;top:0;width:1px;height:20px;background:#e3e3e3"></div>
<div class="a" style="left:477px;top:20px;width:1px;height:148px;background:#a0a0a0"></div>
<div class="g" style="left:29px;top:1px;width:64px;text-align:center;line-height:19px;font-size:10.5px;overflow:visible">A</div>
<div class="g" style="left:93px;top:1px;width:64px;text-align:center;line-height:19px;font-size:10.5px;overflow:visible">B</div>
<div class="g" style="left:157px;top:1px;width:64px;text-align:center;line-height:19px;font-size:10.5px;overflow:visible">C</div>
<div class="g" style="left:221px;top:1px;width:64px;text-align:center;line-height:19px;font-size:10.5px;overflow:visible">D</div>
<div class="g" style="left:285px;top:1px;width:64px;text-align:center;line-height:19px;font-size:10.5px;overflow:visible">E</div>
<div class="g" style="left:349px;top:1px;width:64px;text-align:center;line-height:19px;font-size:10.5px;overflow:visible">F</div>
<div class="g" style="left:413px;top:1px;width:64px;text-align:center;line-height:19px;font-size:10.5px;overflow:visible">G</div>
<div class="g" style="left:477px;top:1px;width:64px;text-align:center;line-height:19px;font-size:10.5px;overflow:visible">H</div>
<div class="g" style="left:0;top:20px;width:29px;text-align:center;line-height:19px;font-size:10.5px">1</div>
<div class="g" style="left:0;top:39px;width:29px;text-align:center;line-height:19px;font-size:10.5px">2</div>
<div class="g" style="left:0;top:58px;width:29px;text-align:center;line-height:19px;font-size:10.5px">3</div>
<div class="g" style="left:0;top:77px;width:29px;text-align:center;line-height:19px;font-size:10.5px">4</div>
<div class="g" style="left:0;top:96px;width:29px;text-align:center;line-height:19px;font-size:10.5px">5</div>
<div class="g" style="left:0;top:115px;width:29px;text-align:center;line-height:19px;font-size:10.5px">6</div>
<div class="g" style="left:0;top:134px;width:29px;text-align:center;line-height:19px;font-size:10.5px">7</div>
<div class="g" style="left:0;top:153px;width:29px;text-align:center;line-height:19px;font-size:10.5px">8</div>
<div class="g" style="left:32px;top:20px;width:60px;line-height:19px;font-size:10.5px;letter-spacing:-0.15px;color:#000">CUST_NO</div>
<div class="g" style="left:96px;top:20px;width:60px;line-height:19px;font-size:10.5px;letter-spacing:-0.15px;color:#000">CUSTOMER</div>
<div class="g" style="left:160px;top:20px;width:60px;line-height:19px;font-size:10.5px;letter-spacing:-0.15px;color:#000">CONTACT_FIRST</div>
<div class="g" style="left:224px;top:20px;width:60px;line-height:19px;font-size:10.5px;letter-spacing:-0.15px;color:#000">CONTACT_LAST</div>
<div class="g" style="left:288px;top:20px;width:60px;line-height:19px;font-size:10.5px;letter-spacing:-0.15px;color:#000">CITY</div>
<div class="g" style="left:352px;top:20px;width:60px;line-height:19px;font-size:10.5px;letter-spacing:-0.15px;color:#000">STATE_PROVINCE</div>
<div class="g" style="left:416px;top:20px;width:60px;line-height:19px;font-size:10.5px;letter-spacing:-0.15px;color:#000">COUNTRY</div>
<div class="g" style="left:480px;top:20px;width:60px;line-height:19px;font-size:10.5px;letter-spacing:-0.15px;color:#000">POSTAL_CODE</div>
<div class="g" style="left:32px;top:39px;width:60px;line-height:19px;font-size:10.5px;letter-spacing:-0.15px;color:#fff">1001</div>
<div class="g" style="left:96px;top:39px;width:60px;line-height:19px;font-size:10.5px;letter-spacing:-0.15px;color:#000">Signature Design</div>
<div class="g" style="left:160px;top:39px;width:60px;line-height:19px;font-size:10.5px;letter-spacing:-0.15px;color:#000">Dale J.</div>
<div class="g" style="left:224px;top:39px;width:60px;line-height:19px;font-size:10.5px;letter-spacing:-0.15px;color:#000">Little</div>
<div class="g" style="left:288px;top:39px;width:60px;line-height:19px;font-size:10.5px;letter-spacing:-0.15px;color:#000">San Diego</div>
<div class="g" style="left:352px;top:39px;width:60px;line-height:19px;font-size:10.5px;letter-spacing:-0.15px;color:#000">CA</div>
<div class="g" style="left:416px;top:39px;width:60px;line-height:19px;font-size:10.5px;letter-spacing:-0.15px;color:#000">USA</div>
<div class="g" style="left:480px;top:39px;width:60px;line-height:19px;font-size:10.5px;letter-spacing:-0.15px;color:#000">92121</div>
<div class="g" style="left:32px;top:58px;width:60px;line-height:19px;font-size:10.5px;letter-spacing:-0.15px;color:#fff">1002</div>
<div class="g" style="left:96px;top:58px;width:60px;line-height:19px;font-size:10.5px;letter-spacing:-0.15px;color:#000">Dallas Technologies</div>
<div class="g" style="left:160px;top:58px;width:60px;line-height:19px;font-size:10.5px;letter-spacing:-0.15px;color:#000">Glen</div>
<div class="g" style="left:224px;top:58px;width:60px;line-height:19px;font-size:10.5px;letter-spacing:-0.15px;color:#000">Brown</div>
<div class="g" style="left:288px;top:58px;width:60px;line-height:19px;font-size:10.5px;letter-spacing:-0.15px;color:#000">Dallas</div>
<div class="g" style="left:352px;top:58px;width:60px;line-height:19px;font-size:10.5px;letter-spacing:-0.15px;color:#000">TX</div>
<div class="g" style="left:416px;top:58px;width:60px;line-height:19px;font-size:10.5px;letter-spacing:-0.15px;color:#000">USA</div>
<div class="g" style="left:480px;top:58px;width:60px;line-height:19px;font-size:10.5px;letter-spacing:-0.15px;color:#000">75205</div>
<div class="g" style="left:32px;top:77px;width:60px;line-height:19px;font-size:10.5px;letter-spacing:-0.15px;color:#fff">1003</div>
<div class="g" style="left:96px;top:77px;width:60px;line-height:19px;font-size:10.5px;letter-spacing:-0.15px;color:#000">Buttle, Griffith and Co.</div>
<div class="g" style="left:160px;top:77px;width:60px;line-height:19px;font-size:10.5px;letter-spacing:-0.15px;color:#000">James</div>
<div class="g" style="left:224px;top:77px;width:60px;line-height:19px;font-size:10.5px;letter-spacing:-0.15px;color:#000">Buttle</div>
<div class="g" style="left:288px;top:77px;width:60px;line-height:19px;font-size:10.5px;letter-spacing:-0.15px;color:#000">Boston</div>
<div class="g" style="left:352px;top:77px;width:60px;line-height:19px;font-size:10.5px;letter-spacing:-0.15px;color:#000">MA</div>
<div class="g" style="left:416px;top:77px;width:60px;line-height:19px;font-size:10.5px;letter-spacing:-0.15px;color:#000">USA</div>
<div class="g" style="left:480px;top:77px;width:60px;line-height:19px;font-size:10.5px;letter-spacing:-0.15px;color:#000">02115</div>
<div class="g" style="left:32px;top:96px;width:60px;line-height:19px;font-size:10.5px;letter-spacing:-0.15px;color:#fff">1004</div>
<div class="g" style="left:96px;top:96px;width:60px;line-height:19px;font-size:10.5px;letter-spacing:-0.15px;color:#000">Central Bank</div>
<div class="g" style="left:160px;top:96px;width:60px;line-height:19px;font-size:10.5px;letter-spacing:-0.15px;color:#000">Elizabeth</div>
<div class="g" style="left:224px;top:96px;width:60px;line-height:19px;font-size:10.5px;letter-spacing:-0.15px;color:#000">Brocket</div>
<div class="g" style="left:288px;top:96px;width:60px;line-height:19px;font-size:10.5px;letter-spacing:-0.15px;color:#000">Manchester</div>
<div class="g" style="left:352px;top:96px;width:60px;line-height:19px;font-size:10.5px;letter-spacing:-0.15px;color:#000">null</div>
<div class="g" style="left:416px;top:96px;width:60px;line-height:19px;font-size:10.5px;letter-spacing:-0.15px;color:#000">England</div>
<div class="g" style="left:480px;top:96px;width:60px;line-height:19px;font-size:10.5px;letter-spacing:-0.15px;color:#000">M2 3LA</div>
<div class="g" style="left:32px;top:115px;width:60px;line-height:19px;font-size:10.5px;letter-spacing:-0.15px;color:#fff">1005</div>
<div class="g" style="left:96px;top:115px;width:60px;line-height:19px;font-size:10.5px;letter-spacing:-0.15px;color:#000">DT Systems, LTD.</div>
<div class="g" style="left:160px;top:115px;width:60px;line-height:19px;font-size:10.5px;letter-spacing:-0.15px;color:#000">Tai</div>
<div class="g" style="left:224px;top:115px;width:60px;line-height:19px;font-size:10.5px;letter-spacing:-0.15px;color:#000">Wu</div>
<div class="g" style="left:288px;top:115px;width:60px;line-height:19px;font-size:10.5px;letter-spacing:-0.15px;color:#000">Central Hong Kong</div>
<div class="g" style="left:352px;top:115px;width:60px;line-height:19px;font-size:10.5px;letter-spacing:-0.15px;color:#000">null</div>
<div class="g" style="left:416px;top:115px;width:60px;line-height:19px;font-size:10.5px;letter-spacing:-0.15px;color:#000">Hong Kong</div>
<div class="g" style="left:480px;top:115px;width:60px;line-height:19px;font-size:10.5px;letter-spacing:-0.15px;color:#000">null</div>
<div class="g" style="left:32px;top:134px;width:60px;line-height:19px;font-size:10.5px;letter-spacing:-0.15px;color:#fff">1006</div>
<div class="g" style="left:96px;top:134px;width:60px;line-height:19px;font-size:10.5px;letter-spacing:-0.15px;color:#000">DataServe International</div>
<div class="g" style="left:160px;top:134px;width:60px;line-height:19px;font-size:10.5px;letter-spacing:-0.15px;color:#000">Tomas</div>
<div class="g" style="left:224px;top:134px;width:60px;line-height:19px;font-size:10.5px;letter-spacing:-0.15px;color:#000">Bright</div>
<div class="g" style="left:288px;top:134px;width:60px;line-height:19px;font-size:10.5px;letter-spacing:-0.15px;color:#000">Ottawa</div>
<div class="g" style="left:352px;top:134px;width:60px;line-height:19px;font-size:10.5px;letter-spacing:-0.15px;color:#000">ON</div>
<div class="g" style="left:416px;top:134px;width:60px;line-height:19px;font-size:10.5px;letter-spacing:-0.15px;color:#000">Canada</div>
<div class="g" style="left:480px;top:134px;width:60px;line-height:19px;font-size:10.5px;letter-spacing:-0.15px;color:#000">K1V 9G8</div>
<div class="g" style="left:32px;top:153px;width:60px;line-height:19px;font-size:10.5px;letter-spacing:-0.15px;color:#fff">1007</div>
<div class="g" style="left:96px;top:153px;width:60px;line-height:19px;font-size:10.5px;letter-spacing:-0.15px;color:#000">Mrs. Beauvais</div>
<div class="g" style="left:160px;top:153px;width:60px;line-height:19px;font-size:10.5px;letter-spacing:-0.15px;color:#000">null</div>
<div class="g" style="left:224px;top:153px;width:60px;line-height:19px;font-size:10.5px;letter-spacing:-0.15px;color:#000">Mrs. Beauvais</div>
<div class="g" style="left:288px;top:153px;width:60px;line-height:19px;font-size:10.5px;letter-spacing:-0.15px;color:#000">Pebble Beach</div>
<div class="g" style="left:352px;top:153px;width:60px;line-height:19px;font-size:10.5px;letter-spacing:-0.15px;color:#000">CA</div>
<div class="g" style="left:416px;top:153px;width:60px;line-height:19px;font-size:10.5px;letter-spacing:-0.15px;color:#000">USA</div>
<div class="g" style="left:480px;top:153px;width:60px;line-height:19px;font-size:10.5px;letter-spacing:-0.15px;color:#000">93953</div>
</div>
<div class="a" style="left:366px;top:498px;width:520px;height:16px;background:#f0f0f0"></div>
<div class="a" style="left:383px;top:498px;width:411px;height:16px;background:#cdcdcd"></div>
<svg style="left:371px;top:502px" width="6" height="8" viewBox="0 0 6 8"><path d="M5.2 0.8L2 4L5.2 7.2" fill="none" stroke="#505050" stroke-width="1.9"/></svg>
<svg style="left:874px;top:502px" width="6" height="8" viewBox="0 0 6 8"><path d="M0.8 0.8L4 4L0.8 7.2" fill="none" stroke="#505050" stroke-width="1.9"/></svg>
<div class="a" style="left:886px;top:330px;width:15px;height:184px;background:#f0f0f0"></div><div class="a" style="left:901px;top:330px;width:1px;height:184px;background:#fafafa"></div>
<div class="a" style="left:886px;top:347px;width:15px;height:58px;background:#cdcdcd"></div>
<svg style="left:890px;top:336px" width="8" height="6" viewBox="0 0 8 6"><path d="M0.8 5.2L4 2L7.2 5.2" fill="none" stroke="#505050" stroke-width="1.9"/></svg>
<svg style="left:890px;top:486px" width="8" height="6" viewBox="0 0 8 6"><path d="M0.8 0.8L4 4L7.2 0.8" fill="none" stroke="#505050" stroke-width="1.9"/></svg>

<!-- status -->
<div class="t" style="left:367px;top:518px;letter-spacing:-0.09px">To select the column click its header. To select the row click its number. To select several cells at once</div>
<div class="t" style="left:367px;top:533px;letter-spacing:0.07px">click the right cell and the last cell holding the "Shift" button.</div>

<div class="a" style="left:1px;top:550px;width:902px;height:1px;background:#a6a6a6"></div>
<div class="a" style="left:1px;top:551px;width:902px;height:1px;background:#f6f6f6"></div>

<!-- bottom buttons -->
<div class="btn" style="left:10px;top:560px;width:73px;height:23px"></div>
<div class="t" style="left:33px;top:564px">Help</div>
<div class="btn" style="left:91px;top:560px;width:98px;height:23px"></div>
<div class="a" style="left:175px;top:561px;width:2px;height:21px;background:#b0b0b0"></div>
<svg style="left:178px;top:569px" width="10" height="6"><path d="M1 1h7l-3.5 4z" fill="#000"/></svg>
<div class="t" style="left:119px;top:564px">Tools</div>
<div class="btn" style="left:625px;top:560px;width:84px;height:23px"></div>
<div class="t" style="left:645px;top:564px">&lt;&lt; Back</div>
<div class="btn" style="left:717px;top:560px;width:84px;height:23px"></div>
<div class="t" style="left:736px;top:564px">Next &gt;&gt;</div>
<div class="btn" style="left:809px;top:560px;width:84px;height:23px"></div>
<div class="t" style="left:836px;top:564px">Close</div>

<!-- window border -->
<div class="a" style="left:902px;top:84px;width:1px;height:508px;background:#f8fcff"></div>
<div class="a" style="left:1px;top:591px;width:902px;height:1px;background:#f8fcff"></div>
<div class="a" style="left:0;top:0;width:904px;height:593px;border:1px solid #1b3550"></div>
</body></html>
